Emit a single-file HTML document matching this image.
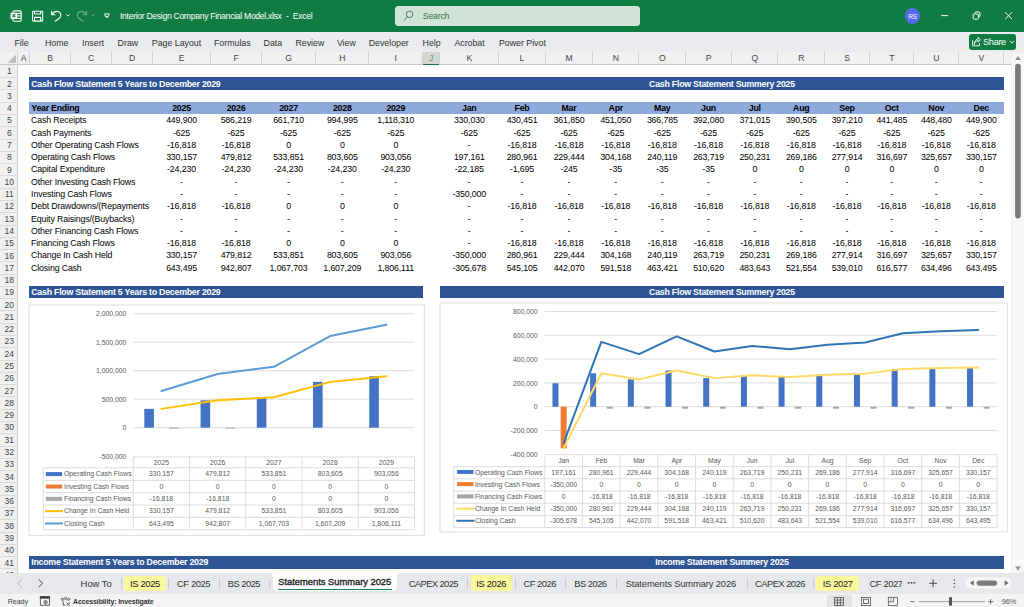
<!DOCTYPE html><html><head><meta charset="utf-8"><title>Interior Design Company Financial Model.xlsx - Excel</title>
<style>html,body{margin:0;padding:0;}body{width:1024px;height:607px;overflow:hidden;position:relative;background:#fff;font-family:"Liberation Sans",sans-serif;}div{box-sizing:border-box;}</style></head><body>
<div style="position:absolute;left:0px;top:0px;width:1024px;height:32px;background:#107C41;"></div>
<svg style="position:absolute;left:0;top:0" width="130" height="32" viewBox="0 0 130 32">
<g fill="none" stroke="#fff" stroke-width="1.1">
<rect x="12.9" y="10.9" width="8.3" height="10.4" rx="1.2"/>
<line x1="16.8" y1="13.4" x2="21" y2="13.4"/><line x1="16.8" y1="15.9" x2="21" y2="15.9"/><line x1="16.8" y1="18.4" x2="21" y2="18.4"/>
</g>
<rect x="10.6" y="12.7" width="6.6" height="6.2" rx="0.6" fill="#fff"/>
<path d="M12.4 14.2 L15.4 17.4 M15.4 14.2 L12.4 17.4" stroke="#107C41" stroke-width="1.15"/>
<g fill="none" stroke="#fff" stroke-width="1.1" stroke-linejoin="round">
<rect x="32.6" y="11.2" width="10" height="9.9" rx="0.8"/>
<path d="M34.6 11.2 V14 H40.6 V11.2"/>
<path d="M34.6 21.1 V17.4 H40.6 V21.1"/>
</g>
<g fill="none" stroke="#fff" stroke-width="1.1" stroke-linecap="round" stroke-linejoin="round">
<path d="M51.6 11.3 V14.7 H55"/>
<path d="M51.9 14.4 C53.2 12.4 55 11.4 57 11.4 C60.6 11.4 62.2 15.6 59.6 18 L55.2 21.2"/>
<path d="M66.6 14.8 L68 16.1 L69.4 14.8" stroke-width="0.9"/>
</g>
<g fill="none" stroke="#6FAF8A" stroke-width="1.1" stroke-linecap="round" stroke-linejoin="round">
<path d="M86.6 11.3 V14.7 H83.2"/>
<path d="M86.3 14.4 C85 12.4 83.2 11.4 81.2 11.4 C77.6 11.4 76 15.6 78.6 18 L83 21.2"/>
<path d="M91.6 14.8 L93 16.1 L94.4 14.8" stroke-width="0.9"/>
</g>
<g fill="none" stroke="#fff" stroke-width="1.1" stroke-linecap="round">
<line x1="104.4" y1="14" x2="109.4" y2="14"/>
<path d="M105 15.6 L106.9 17.4 L108.8 15.6"/>
</g>
</svg>
<div style="position:absolute;left:120px;top:9.9px;height:12px;line-height:12px;font-size:8.6px;color:#fff;font-weight:400;letter-spacing:-0.3px;white-space:nowrap;">Interior Design Company Financial Model.xlsx</div>
<div style="position:absolute;left:286px;top:9.9px;height:12px;line-height:12px;font-size:8.6px;color:#fff;font-weight:400;letter-spacing:0px;white-space:nowrap;">-</div>
<div style="position:absolute;left:292.8px;top:9.9px;height:12px;line-height:12px;font-size:8.6px;color:#fff;font-weight:400;letter-spacing:-0.3px;white-space:nowrap;">Excel</div>
<div style="position:absolute;left:395.1px;top:5.5px;width:244.7px;height:20.7px;background:#CFE3D6;border-radius:3px;border:1px solid #D3E6D9;"></div>
<svg style="position:absolute;left:400px;top:8px" width="16" height="16" viewBox="0 0 16 16"><g fill="none" stroke="#3F7D58" stroke-width="0.95"><circle cx="9.6" cy="6.4" r="3.3"/><line x1="7.3" y1="8.8" x2="4.2" y2="12.4" stroke-linecap="round"/></g></svg>
<div style="position:absolute;left:422.8px;top:10.2px;height:12px;line-height:12px;font-size:8.8px;color:#3A7752;font-weight:400;letter-spacing:-0.25px;white-space:nowrap;">Search</div>
<div style="position:absolute;left:904.7px;top:8px;width:15.8px;height:15.8px;border-radius:50%;background:#5468E6;"></div>
<div style="position:absolute;left:902.5px;top:11.2px;width:20px;text-align:center;height:12px;line-height:12px;font-size:6.6px;color:#fff;font-weight:400;letter-spacing:-0.35px;white-space:nowrap;">RS</div>
<svg style="position:absolute;left:930px;top:0" width="94" height="32" viewBox="930 0 94 32"><g fill="none" stroke="#fff" stroke-width="1">
<line x1="941.2" y1="15.6" x2="948" y2="15.6"/>
<rect x="973.2" y="14" width="5.2" height="5.2" rx="1"/>
<path d="M975 13.2 V12.9 A0.9 0.9 0 0 1 975.9 12 H979 A0.9 0.9 0 0 1 979.9 12.9 V16 A0.9 0.9 0 0 1 979 16.9 H978.6"/>
<path d="M1005.2 12.3 L1012 19.1 M1012 12.3 L1005.2 19.1"/>
</g></svg>
<div style="position:absolute;left:0px;top:32px;width:1024px;height:20px;background:#E9EBEE;"></div>
<div style="position:absolute;left:14.5px;top:36.6px;height:12px;line-height:12px;font-size:8.8px;color:#333;font-weight:400;letter-spacing:0px;white-space:nowrap;">File</div>
<div style="position:absolute;left:45px;top:36.6px;height:12px;line-height:12px;font-size:8.8px;color:#333;font-weight:400;letter-spacing:0px;white-space:nowrap;">Home</div>
<div style="position:absolute;left:82px;top:36.6px;height:12px;line-height:12px;font-size:8.8px;color:#333;font-weight:400;letter-spacing:0px;white-space:nowrap;">Insert</div>
<div style="position:absolute;left:117.6px;top:36.6px;height:12px;line-height:12px;font-size:8.8px;color:#333;font-weight:400;letter-spacing:0px;white-space:nowrap;">Draw</div>
<div style="position:absolute;left:151.8px;top:36.6px;height:12px;line-height:12px;font-size:8.8px;color:#333;font-weight:400;letter-spacing:0px;white-space:nowrap;">Page Layout</div>
<div style="position:absolute;left:214px;top:36.6px;height:12px;line-height:12px;font-size:8.8px;color:#333;font-weight:400;letter-spacing:0px;white-space:nowrap;">Formulas</div>
<div style="position:absolute;left:263.6px;top:36.6px;height:12px;line-height:12px;font-size:8.8px;color:#333;font-weight:400;letter-spacing:0px;white-space:nowrap;">Data</div>
<div style="position:absolute;left:295.4px;top:36.6px;height:12px;line-height:12px;font-size:8.8px;color:#333;font-weight:400;letter-spacing:0px;white-space:nowrap;">Review</div>
<div style="position:absolute;left:336.9px;top:36.6px;height:12px;line-height:12px;font-size:8.8px;color:#333;font-weight:400;letter-spacing:0px;white-space:nowrap;">View</div>
<div style="position:absolute;left:368.7px;top:36.6px;height:12px;line-height:12px;font-size:8.8px;color:#333;font-weight:400;letter-spacing:0px;white-space:nowrap;">Developer</div>
<div style="position:absolute;left:422.6px;top:36.6px;height:12px;line-height:12px;font-size:8.8px;color:#333;font-weight:400;letter-spacing:0px;white-space:nowrap;">Help</div>
<div style="position:absolute;left:454.4px;top:36.6px;height:12px;line-height:12px;font-size:8.8px;color:#333;font-weight:400;letter-spacing:0px;white-space:nowrap;">Acrobat</div>
<div style="position:absolute;left:498.9px;top:36.6px;height:12px;line-height:12px;font-size:8.8px;color:#333;font-weight:400;letter-spacing:0px;white-space:nowrap;">Power Pivot</div>
<div style="position:absolute;left:969.1px;top:34.2px;width:47.2px;height:15.8px;background:#107C41;border-radius:3px;"></div>
<svg style="position:absolute;left:969px;top:34px" width="48" height="16" viewBox="969 34 48 16"><g fill="none" stroke="#fff" stroke-width="0.9" stroke-linejoin="round" stroke-linecap="round">
<path d="M972.6 40.6 V45.8 H979.6 V43.6"/>
<path d="M974.4 44 C974.8 41.6 976.4 40.6 978.2 40.6 V42.2 L980.4 39.8 L978.2 37.4 V39 C975.8 39.2 974.6 41.2 974.4 44 Z"/>
<path d="M1010.4 41.4 L1012.1 43 L1013.8 41.4"/>
</g></svg>
<div style="position:absolute;left:983.1px;top:36.2px;height:12px;line-height:12px;font-size:9.2px;color:#fff;font-weight:400;letter-spacing:-0.35px;white-space:nowrap;">Share</div>
<div style="position:absolute;left:0px;top:52px;width:1011.3px;height:12.5px;background:#F0F0F0;border-bottom:1px solid #C6C6C6;"></div>
<svg style="position:absolute;left:0;top:52px" width="18" height="13" viewBox="0 52 18 13"><path d="M16 54.8 V62.8 H7.8 Z" fill="#BDBDBD"/></svg>
<div style="position:absolute;left:17.3px;top:52px;width:0.9px;height:12.5px;background:#D0D0D0;"></div>
<div style="position:absolute;left:28.65px;top:52px;width:0.9px;height:12.5px;background:#D0D0D0;"></div>
<div style="position:absolute;left:3.5px;top:52.4px;width:40px;text-align:center;height:12px;line-height:12px;font-size:8.6px;color:#444;font-weight:400;letter-spacing:0px;white-space:nowrap;">A</div>
<div style="position:absolute;left:69.9px;top:52px;width:0.9px;height:12.5px;background:#D0D0D0;"></div>
<div style="position:absolute;left:30.12px;top:52.4px;width:40px;text-align:center;height:12px;line-height:12px;font-size:8.6px;color:#444;font-weight:400;letter-spacing:0px;white-space:nowrap;">B</div>
<div style="position:absolute;left:110.65px;top:52px;width:0.9px;height:12.5px;background:#D0D0D0;"></div>
<div style="position:absolute;left:71.12px;top:52.4px;width:40px;text-align:center;height:12px;line-height:12px;font-size:8.6px;color:#444;font-weight:400;letter-spacing:0px;white-space:nowrap;">C</div>
<div style="position:absolute;left:151.65px;top:52px;width:0.9px;height:12.5px;background:#D0D0D0;"></div>
<div style="position:absolute;left:112px;top:52.4px;width:40px;text-align:center;height:12px;line-height:12px;font-size:8.6px;color:#444;font-weight:400;letter-spacing:0px;white-space:nowrap;">D</div>
<div style="position:absolute;left:209.65px;top:52px;width:0.9px;height:12.5px;background:#D0D0D0;"></div>
<div style="position:absolute;left:161.5px;top:52.4px;width:40px;text-align:center;height:12px;line-height:12px;font-size:8.6px;color:#444;font-weight:400;letter-spacing:0px;white-space:nowrap;">E</div>
<div style="position:absolute;left:260.65px;top:52px;width:0.9px;height:12.5px;background:#D0D0D0;"></div>
<div style="position:absolute;left:216px;top:52.4px;width:40px;text-align:center;height:12px;line-height:12px;font-size:8.6px;color:#444;font-weight:400;letter-spacing:0px;white-space:nowrap;">F</div>
<div style="position:absolute;left:314.65px;top:52px;width:0.9px;height:12.5px;background:#D0D0D0;"></div>
<div style="position:absolute;left:268.5px;top:52.4px;width:40px;text-align:center;height:12px;line-height:12px;font-size:8.6px;color:#444;font-weight:400;letter-spacing:0px;white-space:nowrap;">G</div>
<div style="position:absolute;left:368.15px;top:52px;width:0.9px;height:12.5px;background:#D0D0D0;"></div>
<div style="position:absolute;left:322.25px;top:52.4px;width:40px;text-align:center;height:12px;line-height:12px;font-size:8.6px;color:#444;font-weight:400;letter-spacing:0px;white-space:nowrap;">H</div>
<div style="position:absolute;left:421.65px;top:52px;width:0.9px;height:12.5px;background:#D0D0D0;"></div>
<div style="position:absolute;left:375.75px;top:52.4px;width:40px;text-align:center;height:12px;line-height:12px;font-size:8.6px;color:#444;font-weight:400;letter-spacing:0px;white-space:nowrap;">I</div>
<div style="position:absolute;left:422.5px;top:52px;width:17.5px;height:12.5px;background:#D6D6D6;"></div>
<div style="position:absolute;left:422.5px;top:63.6px;width:17.5px;height:1.3px;background:#107C41;"></div>
<div style="position:absolute;left:439.15px;top:52px;width:0.9px;height:12.5px;background:#D0D0D0;"></div>
<div style="position:absolute;left:411.25px;top:52.4px;width:40px;text-align:center;height:12px;line-height:12px;font-size:8.6px;color:#5E8E6E;font-weight:400;letter-spacing:0px;white-space:nowrap;">J</div>
<div style="position:absolute;left:497.65px;top:52px;width:0.9px;height:12.5px;background:#D0D0D0;"></div>
<div style="position:absolute;left:449.25px;top:52.4px;width:40px;text-align:center;height:12px;line-height:12px;font-size:8.6px;color:#444;font-weight:400;letter-spacing:0px;white-space:nowrap;">K</div>
<div style="position:absolute;left:544.65px;top:52px;width:0.9px;height:12.5px;background:#D0D0D0;"></div>
<div style="position:absolute;left:502px;top:52.4px;width:40px;text-align:center;height:12px;line-height:12px;font-size:8.6px;color:#444;font-weight:400;letter-spacing:0px;white-space:nowrap;">L</div>
<div style="position:absolute;left:591.65px;top:52px;width:0.9px;height:12.5px;background:#D0D0D0;"></div>
<div style="position:absolute;left:549px;top:52.4px;width:40px;text-align:center;height:12px;line-height:12px;font-size:8.6px;color:#444;font-weight:400;letter-spacing:0px;white-space:nowrap;">M</div>
<div style="position:absolute;left:638.15px;top:52px;width:0.9px;height:12.5px;background:#D0D0D0;"></div>
<div style="position:absolute;left:595.75px;top:52.4px;width:40px;text-align:center;height:12px;line-height:12px;font-size:8.6px;color:#444;font-weight:400;letter-spacing:0px;white-space:nowrap;">N</div>
<div style="position:absolute;left:684.65px;top:52px;width:0.9px;height:12.5px;background:#D0D0D0;"></div>
<div style="position:absolute;left:642.25px;top:52.4px;width:40px;text-align:center;height:12px;line-height:12px;font-size:8.6px;color:#444;font-weight:400;letter-spacing:0px;white-space:nowrap;">O</div>
<div style="position:absolute;left:730.65px;top:52px;width:0.9px;height:12.5px;background:#D0D0D0;"></div>
<div style="position:absolute;left:688.5px;top:52.4px;width:40px;text-align:center;height:12px;line-height:12px;font-size:8.6px;color:#444;font-weight:400;letter-spacing:0px;white-space:nowrap;">P</div>
<div style="position:absolute;left:777.15px;top:52px;width:0.9px;height:12.5px;background:#D0D0D0;"></div>
<div style="position:absolute;left:734.75px;top:52.4px;width:40px;text-align:center;height:12px;line-height:12px;font-size:8.6px;color:#444;font-weight:400;letter-spacing:0px;white-space:nowrap;">Q</div>
<div style="position:absolute;left:823.65px;top:52px;width:0.9px;height:12.5px;background:#D0D0D0;"></div>
<div style="position:absolute;left:781.25px;top:52.4px;width:40px;text-align:center;height:12px;line-height:12px;font-size:8.6px;color:#444;font-weight:400;letter-spacing:0px;white-space:nowrap;">R</div>
<div style="position:absolute;left:868.65px;top:52px;width:0.9px;height:12.5px;background:#D0D0D0;"></div>
<div style="position:absolute;left:827px;top:52.4px;width:40px;text-align:center;height:12px;line-height:12px;font-size:8.6px;color:#444;font-weight:400;letter-spacing:0px;white-space:nowrap;">S</div>
<div style="position:absolute;left:913.15px;top:52px;width:0.9px;height:12.5px;background:#D0D0D0;"></div>
<div style="position:absolute;left:871.75px;top:52.4px;width:40px;text-align:center;height:12px;line-height:12px;font-size:8.6px;color:#444;font-weight:400;letter-spacing:0px;white-space:nowrap;">T</div>
<div style="position:absolute;left:957.65px;top:52px;width:0.9px;height:12.5px;background:#D0D0D0;"></div>
<div style="position:absolute;left:916.25px;top:52.4px;width:40px;text-align:center;height:12px;line-height:12px;font-size:8.6px;color:#444;font-weight:400;letter-spacing:0px;white-space:nowrap;">U</div>
<div style="position:absolute;left:1003.15px;top:52px;width:0.9px;height:12.5px;background:#D0D0D0;"></div>
<div style="position:absolute;left:961.25px;top:52.4px;width:40px;text-align:center;height:12px;line-height:12px;font-size:8.6px;color:#444;font-weight:400;letter-spacing:0px;white-space:nowrap;">V</div>
<div style="position:absolute;left:1011.3px;top:52px;width:12.7px;height:521px;background:#F0F0F0;"></div>
<div style="position:absolute;left:1011.8px;top:53px;width:12.2px;height:519.5px;background:#F7F7F7;border-radius:5px;"></div>
<svg style="position:absolute;left:1011px;top:52px" width="13" height="521" viewBox="1011 52 13 521"><path d="M1015.2 60 L1018 56 L1020.8 60 Z" fill="#8A8A8A"/><path d="M1015.2 566.6 L1018 570.8 L1020.8 566.6 Z" fill="#8A8A8A"/><rect x="1015.1" y="63.8" width="5.7" height="154.6" rx="2.85" fill="#7B7B7B"/></svg>
<div style="position:absolute;left:0px;top:64.5px;width:17.5px;height:508.5px;background:#F0F0F0;"></div>
<div style="position:absolute;left:17.3px;top:64.5px;width:0.9px;height:508.5px;background:#CFCFCF;"></div>
<div style="position:absolute;left:0px;top:77.15px;width:17.5px;height:0.9px;background:#DADADA;"></div>
<div style="position:absolute;left:0.55px;top:65.32px;width:17.5px;text-align:center;height:12.3px;line-height:12.3px;font-size:8.5px;color:#444;font-weight:400;letter-spacing:0px;white-space:nowrap;">1</div>
<div style="position:absolute;left:0px;top:89.43px;width:17.5px;height:0.9px;background:#DADADA;"></div>
<div style="position:absolute;left:0.55px;top:77.6px;width:17.5px;text-align:center;height:12.3px;line-height:12.3px;font-size:8.5px;color:#444;font-weight:400;letter-spacing:0px;white-space:nowrap;">2</div>
<div style="position:absolute;left:0px;top:101.71px;width:17.5px;height:0.9px;background:#DADADA;"></div>
<div style="position:absolute;left:0.55px;top:89.88px;width:17.5px;text-align:center;height:12.3px;line-height:12.3px;font-size:8.5px;color:#444;font-weight:400;letter-spacing:0px;white-space:nowrap;">3</div>
<div style="position:absolute;left:0px;top:113.99px;width:17.5px;height:0.9px;background:#DADADA;"></div>
<div style="position:absolute;left:0.55px;top:102.16px;width:17.5px;text-align:center;height:12.3px;line-height:12.3px;font-size:8.5px;color:#444;font-weight:400;letter-spacing:0px;white-space:nowrap;">4</div>
<div style="position:absolute;left:0px;top:126.27px;width:17.5px;height:0.9px;background:#DADADA;"></div>
<div style="position:absolute;left:0.55px;top:114.44px;width:17.5px;text-align:center;height:12.3px;line-height:12.3px;font-size:8.5px;color:#444;font-weight:400;letter-spacing:0px;white-space:nowrap;">5</div>
<div style="position:absolute;left:0px;top:138.55px;width:17.5px;height:0.9px;background:#DADADA;"></div>
<div style="position:absolute;left:0.55px;top:126.72px;width:17.5px;text-align:center;height:12.3px;line-height:12.3px;font-size:8.5px;color:#444;font-weight:400;letter-spacing:0px;white-space:nowrap;">6</div>
<div style="position:absolute;left:0px;top:150.83px;width:17.5px;height:0.9px;background:#DADADA;"></div>
<div style="position:absolute;left:0.55px;top:139px;width:17.5px;text-align:center;height:12.3px;line-height:12.3px;font-size:8.5px;color:#444;font-weight:400;letter-spacing:0px;white-space:nowrap;">7</div>
<div style="position:absolute;left:0px;top:163.11px;width:17.5px;height:0.9px;background:#DADADA;"></div>
<div style="position:absolute;left:0.55px;top:151.28px;width:17.5px;text-align:center;height:12.3px;line-height:12.3px;font-size:8.5px;color:#444;font-weight:400;letter-spacing:0px;white-space:nowrap;">8</div>
<div style="position:absolute;left:0px;top:175.39px;width:17.5px;height:0.9px;background:#DADADA;"></div>
<div style="position:absolute;left:0.55px;top:163.56px;width:17.5px;text-align:center;height:12.3px;line-height:12.3px;font-size:8.5px;color:#444;font-weight:400;letter-spacing:0px;white-space:nowrap;">9</div>
<div style="position:absolute;left:0px;top:187.67px;width:17.5px;height:0.9px;background:#DADADA;"></div>
<div style="position:absolute;left:0.55px;top:175.84px;width:17.5px;text-align:center;height:12.3px;line-height:12.3px;font-size:8.5px;color:#444;font-weight:400;letter-spacing:0px;white-space:nowrap;">10</div>
<div style="position:absolute;left:0px;top:199.95px;width:17.5px;height:0.9px;background:#DADADA;"></div>
<div style="position:absolute;left:0.55px;top:188.12px;width:17.5px;text-align:center;height:12.3px;line-height:12.3px;font-size:8.5px;color:#444;font-weight:400;letter-spacing:0px;white-space:nowrap;">11</div>
<div style="position:absolute;left:0px;top:212.23px;width:17.5px;height:0.9px;background:#DADADA;"></div>
<div style="position:absolute;left:0.55px;top:200.4px;width:17.5px;text-align:center;height:12.3px;line-height:12.3px;font-size:8.5px;color:#444;font-weight:400;letter-spacing:0px;white-space:nowrap;">12</div>
<div style="position:absolute;left:0px;top:224.51px;width:17.5px;height:0.9px;background:#DADADA;"></div>
<div style="position:absolute;left:0.55px;top:212.68px;width:17.5px;text-align:center;height:12.3px;line-height:12.3px;font-size:8.5px;color:#444;font-weight:400;letter-spacing:0px;white-space:nowrap;">13</div>
<div style="position:absolute;left:0px;top:236.79px;width:17.5px;height:0.9px;background:#DADADA;"></div>
<div style="position:absolute;left:0.55px;top:224.96px;width:17.5px;text-align:center;height:12.3px;line-height:12.3px;font-size:8.5px;color:#444;font-weight:400;letter-spacing:0px;white-space:nowrap;">14</div>
<div style="position:absolute;left:0px;top:249.07px;width:17.5px;height:0.9px;background:#DADADA;"></div>
<div style="position:absolute;left:0.55px;top:237.24px;width:17.5px;text-align:center;height:12.3px;line-height:12.3px;font-size:8.5px;color:#444;font-weight:400;letter-spacing:0px;white-space:nowrap;">15</div>
<div style="position:absolute;left:0px;top:261.35px;width:17.5px;height:0.9px;background:#DADADA;"></div>
<div style="position:absolute;left:0.55px;top:249.52px;width:17.5px;text-align:center;height:12.3px;line-height:12.3px;font-size:8.5px;color:#444;font-weight:400;letter-spacing:0px;white-space:nowrap;">16</div>
<div style="position:absolute;left:0px;top:273.63px;width:17.5px;height:0.9px;background:#DADADA;"></div>
<div style="position:absolute;left:0.55px;top:261.8px;width:17.5px;text-align:center;height:12.3px;line-height:12.3px;font-size:8.5px;color:#444;font-weight:400;letter-spacing:0px;white-space:nowrap;">17</div>
<div style="position:absolute;left:0px;top:285.91px;width:17.5px;height:0.9px;background:#DADADA;"></div>
<div style="position:absolute;left:0.55px;top:274.08px;width:17.5px;text-align:center;height:12.3px;line-height:12.3px;font-size:8.5px;color:#444;font-weight:400;letter-spacing:0px;white-space:nowrap;">18</div>
<div style="position:absolute;left:0px;top:298.19px;width:17.5px;height:0.9px;background:#DADADA;"></div>
<div style="position:absolute;left:0.55px;top:286.36px;width:17.5px;text-align:center;height:12.3px;line-height:12.3px;font-size:8.5px;color:#444;font-weight:400;letter-spacing:0px;white-space:nowrap;">19</div>
<div style="position:absolute;left:0px;top:310.47px;width:17.5px;height:0.9px;background:#DADADA;"></div>
<div style="position:absolute;left:0.55px;top:298.64px;width:17.5px;text-align:center;height:12.3px;line-height:12.3px;font-size:8.5px;color:#444;font-weight:400;letter-spacing:0px;white-space:nowrap;">20</div>
<div style="position:absolute;left:0px;top:322.75px;width:17.5px;height:0.9px;background:#DADADA;"></div>
<div style="position:absolute;left:0.55px;top:310.92px;width:17.5px;text-align:center;height:12.3px;line-height:12.3px;font-size:8.5px;color:#444;font-weight:400;letter-spacing:0px;white-space:nowrap;">21</div>
<div style="position:absolute;left:0px;top:335.03px;width:17.5px;height:0.9px;background:#DADADA;"></div>
<div style="position:absolute;left:0.55px;top:323.2px;width:17.5px;text-align:center;height:12.3px;line-height:12.3px;font-size:8.5px;color:#444;font-weight:400;letter-spacing:0px;white-space:nowrap;">22</div>
<div style="position:absolute;left:0px;top:347.31px;width:17.5px;height:0.9px;background:#DADADA;"></div>
<div style="position:absolute;left:0.55px;top:335.48px;width:17.5px;text-align:center;height:12.3px;line-height:12.3px;font-size:8.5px;color:#444;font-weight:400;letter-spacing:0px;white-space:nowrap;">23</div>
<div style="position:absolute;left:0px;top:359.59px;width:17.5px;height:0.9px;background:#DADADA;"></div>
<div style="position:absolute;left:0.55px;top:347.76px;width:17.5px;text-align:center;height:12.3px;line-height:12.3px;font-size:8.5px;color:#444;font-weight:400;letter-spacing:0px;white-space:nowrap;">24</div>
<div style="position:absolute;left:0px;top:371.87px;width:17.5px;height:0.9px;background:#DADADA;"></div>
<div style="position:absolute;left:0.55px;top:360.04px;width:17.5px;text-align:center;height:12.3px;line-height:12.3px;font-size:8.5px;color:#444;font-weight:400;letter-spacing:0px;white-space:nowrap;">25</div>
<div style="position:absolute;left:0px;top:384.15px;width:17.5px;height:0.9px;background:#DADADA;"></div>
<div style="position:absolute;left:0.55px;top:372.32px;width:17.5px;text-align:center;height:12.3px;line-height:12.3px;font-size:8.5px;color:#444;font-weight:400;letter-spacing:0px;white-space:nowrap;">26</div>
<div style="position:absolute;left:0px;top:396.43px;width:17.5px;height:0.9px;background:#DADADA;"></div>
<div style="position:absolute;left:0.55px;top:384.6px;width:17.5px;text-align:center;height:12.3px;line-height:12.3px;font-size:8.5px;color:#444;font-weight:400;letter-spacing:0px;white-space:nowrap;">27</div>
<div style="position:absolute;left:0px;top:408.71px;width:17.5px;height:0.9px;background:#DADADA;"></div>
<div style="position:absolute;left:0.55px;top:396.88px;width:17.5px;text-align:center;height:12.3px;line-height:12.3px;font-size:8.5px;color:#444;font-weight:400;letter-spacing:0px;white-space:nowrap;">28</div>
<div style="position:absolute;left:0px;top:420.99px;width:17.5px;height:0.9px;background:#DADADA;"></div>
<div style="position:absolute;left:0.55px;top:409.16px;width:17.5px;text-align:center;height:12.3px;line-height:12.3px;font-size:8.5px;color:#444;font-weight:400;letter-spacing:0px;white-space:nowrap;">29</div>
<div style="position:absolute;left:0px;top:433.27px;width:17.5px;height:0.9px;background:#DADADA;"></div>
<div style="position:absolute;left:0.55px;top:421.44px;width:17.5px;text-align:center;height:12.3px;line-height:12.3px;font-size:8.5px;color:#444;font-weight:400;letter-spacing:0px;white-space:nowrap;">30</div>
<div style="position:absolute;left:0px;top:445.55px;width:17.5px;height:0.9px;background:#DADADA;"></div>
<div style="position:absolute;left:0.55px;top:433.72px;width:17.5px;text-align:center;height:12.3px;line-height:12.3px;font-size:8.5px;color:#444;font-weight:400;letter-spacing:0px;white-space:nowrap;">31</div>
<div style="position:absolute;left:0px;top:457.83px;width:17.5px;height:0.9px;background:#DADADA;"></div>
<div style="position:absolute;left:0.55px;top:446px;width:17.5px;text-align:center;height:12.3px;line-height:12.3px;font-size:8.5px;color:#444;font-weight:400;letter-spacing:0px;white-space:nowrap;">32</div>
<div style="position:absolute;left:0px;top:470.11px;width:17.5px;height:0.9px;background:#DADADA;"></div>
<div style="position:absolute;left:0.55px;top:458.28px;width:17.5px;text-align:center;height:12.3px;line-height:12.3px;font-size:8.5px;color:#444;font-weight:400;letter-spacing:0px;white-space:nowrap;">33</div>
<div style="position:absolute;left:0px;top:482.39px;width:17.5px;height:0.9px;background:#DADADA;"></div>
<div style="position:absolute;left:0.55px;top:470.56px;width:17.5px;text-align:center;height:12.3px;line-height:12.3px;font-size:8.5px;color:#444;font-weight:400;letter-spacing:0px;white-space:nowrap;">34</div>
<div style="position:absolute;left:0px;top:494.67px;width:17.5px;height:0.9px;background:#DADADA;"></div>
<div style="position:absolute;left:0.55px;top:482.84px;width:17.5px;text-align:center;height:12.3px;line-height:12.3px;font-size:8.5px;color:#444;font-weight:400;letter-spacing:0px;white-space:nowrap;">35</div>
<div style="position:absolute;left:0px;top:506.95px;width:17.5px;height:0.9px;background:#DADADA;"></div>
<div style="position:absolute;left:0.55px;top:495.12px;width:17.5px;text-align:center;height:12.3px;line-height:12.3px;font-size:8.5px;color:#444;font-weight:400;letter-spacing:0px;white-space:nowrap;">36</div>
<div style="position:absolute;left:0px;top:519.23px;width:17.5px;height:0.9px;background:#DADADA;"></div>
<div style="position:absolute;left:0.55px;top:507.4px;width:17.5px;text-align:center;height:12.3px;line-height:12.3px;font-size:8.5px;color:#444;font-weight:400;letter-spacing:0px;white-space:nowrap;">37</div>
<div style="position:absolute;left:0px;top:531.51px;width:17.5px;height:0.9px;background:#DADADA;"></div>
<div style="position:absolute;left:0.55px;top:519.68px;width:17.5px;text-align:center;height:12.3px;line-height:12.3px;font-size:8.5px;color:#444;font-weight:400;letter-spacing:0px;white-space:nowrap;">38</div>
<div style="position:absolute;left:0px;top:543.79px;width:17.5px;height:0.9px;background:#DADADA;"></div>
<div style="position:absolute;left:0.55px;top:531.96px;width:17.5px;text-align:center;height:12.3px;line-height:12.3px;font-size:8.5px;color:#444;font-weight:400;letter-spacing:0px;white-space:nowrap;">39</div>
<div style="position:absolute;left:0px;top:556.07px;width:17.5px;height:0.9px;background:#DADADA;"></div>
<div style="position:absolute;left:0.55px;top:544.24px;width:17.5px;text-align:center;height:12.3px;line-height:12.3px;font-size:8.5px;color:#444;font-weight:400;letter-spacing:0px;white-space:nowrap;">40</div>
<div style="position:absolute;left:0px;top:568.35px;width:17.5px;height:0.9px;background:#DADADA;"></div>
<div style="position:absolute;left:0.55px;top:556.52px;width:17.5px;text-align:center;height:12.3px;line-height:12.3px;font-size:8.5px;color:#444;font-weight:400;letter-spacing:0px;white-space:nowrap;">41</div>
<div style="position:absolute;left:0px;top:580.63px;width:17.5px;height:0.9px;background:#DADADA;"></div>
<div style="position:absolute;left:0.55px;top:568.8px;width:17.5px;text-align:center;height:12.3px;line-height:12.3px;font-size:8.5px;color:#444;font-weight:400;letter-spacing:0px;white-space:nowrap;">42</div>
<div style="position:absolute;left:18px;top:64.5px;width:993.3px;height:508.5px;background:#fff;"></div>
<div style="position:absolute;left:28.9px;top:77px;width:975.1px;height:12.5px;background:#2F5597;"></div>
<div style="position:absolute;left:31.25px;top:77.5px;height:12.3px;line-height:12.3px;font-size:8.8px;color:#fff;font-weight:700;letter-spacing:-0.24px;white-space:nowrap;">Cash Flow Statement 5 Years to December 2029</div>
<div style="position:absolute;left:572px;top:77.5px;width:300px;text-align:center;height:12.3px;line-height:12.3px;font-size:8.8px;color:#fff;font-weight:700;letter-spacing:-0.24px;white-space:nowrap;">Cash Flow Statement Summery 2025</div>
<div style="position:absolute;left:28.9px;top:101.56px;width:975.1px;height:12.5px;background:#8EA9DB;"></div>
<div style="position:absolute;left:31.25px;top:102.06px;height:12.3px;line-height:12.3px;font-size:8.8px;color:#000;font-weight:700;letter-spacing:-0.24px;white-space:nowrap;">Year Ending</div>
<div style="position:absolute;left:151.5px;top:102.06px;width:60px;text-align:center;height:12.3px;line-height:12.3px;font-size:8.8px;color:#000;font-weight:700;letter-spacing:-0.24px;white-space:nowrap;">2025</div>
<div style="position:absolute;left:206px;top:102.06px;width:60px;text-align:center;height:12.3px;line-height:12.3px;font-size:8.8px;color:#000;font-weight:700;letter-spacing:-0.24px;white-space:nowrap;">2026</div>
<div style="position:absolute;left:258.5px;top:102.06px;width:60px;text-align:center;height:12.3px;line-height:12.3px;font-size:8.8px;color:#000;font-weight:700;letter-spacing:-0.24px;white-space:nowrap;">2027</div>
<div style="position:absolute;left:312.25px;top:102.06px;width:60px;text-align:center;height:12.3px;line-height:12.3px;font-size:8.8px;color:#000;font-weight:700;letter-spacing:-0.24px;white-space:nowrap;">2028</div>
<div style="position:absolute;left:365.75px;top:102.06px;width:60px;text-align:center;height:12.3px;line-height:12.3px;font-size:8.8px;color:#000;font-weight:700;letter-spacing:-0.24px;white-space:nowrap;">2029</div>
<div style="position:absolute;left:439.25px;top:102.06px;width:60px;text-align:center;height:12.3px;line-height:12.3px;font-size:8.8px;color:#000;font-weight:700;letter-spacing:-0.24px;white-space:nowrap;">Jan</div>
<div style="position:absolute;left:492px;top:102.06px;width:60px;text-align:center;height:12.3px;line-height:12.3px;font-size:8.8px;color:#000;font-weight:700;letter-spacing:-0.24px;white-space:nowrap;">Feb</div>
<div style="position:absolute;left:539px;top:102.06px;width:60px;text-align:center;height:12.3px;line-height:12.3px;font-size:8.8px;color:#000;font-weight:700;letter-spacing:-0.24px;white-space:nowrap;">Mar</div>
<div style="position:absolute;left:585.75px;top:102.06px;width:60px;text-align:center;height:12.3px;line-height:12.3px;font-size:8.8px;color:#000;font-weight:700;letter-spacing:-0.24px;white-space:nowrap;">Apr</div>
<div style="position:absolute;left:632.25px;top:102.06px;width:60px;text-align:center;height:12.3px;line-height:12.3px;font-size:8.8px;color:#000;font-weight:700;letter-spacing:-0.24px;white-space:nowrap;">May</div>
<div style="position:absolute;left:678.5px;top:102.06px;width:60px;text-align:center;height:12.3px;line-height:12.3px;font-size:8.8px;color:#000;font-weight:700;letter-spacing:-0.24px;white-space:nowrap;">Jun</div>
<div style="position:absolute;left:724.75px;top:102.06px;width:60px;text-align:center;height:12.3px;line-height:12.3px;font-size:8.8px;color:#000;font-weight:700;letter-spacing:-0.24px;white-space:nowrap;">Jul</div>
<div style="position:absolute;left:771.25px;top:102.06px;width:60px;text-align:center;height:12.3px;line-height:12.3px;font-size:8.8px;color:#000;font-weight:700;letter-spacing:-0.24px;white-space:nowrap;">Aug</div>
<div style="position:absolute;left:817px;top:102.06px;width:60px;text-align:center;height:12.3px;line-height:12.3px;font-size:8.8px;color:#000;font-weight:700;letter-spacing:-0.24px;white-space:nowrap;">Sep</div>
<div style="position:absolute;left:861.75px;top:102.06px;width:60px;text-align:center;height:12.3px;line-height:12.3px;font-size:8.8px;color:#000;font-weight:700;letter-spacing:-0.24px;white-space:nowrap;">Oct</div>
<div style="position:absolute;left:906.25px;top:102.06px;width:60px;text-align:center;height:12.3px;line-height:12.3px;font-size:8.8px;color:#000;font-weight:700;letter-spacing:-0.24px;white-space:nowrap;">Nov</div>
<div style="position:absolute;left:951.25px;top:102.06px;width:60px;text-align:center;height:12.3px;line-height:12.3px;font-size:8.8px;color:#000;font-weight:700;letter-spacing:-0.24px;white-space:nowrap;">Dec</div>
<div style="position:absolute;left:31.1px;top:114.34px;height:12.3px;line-height:12.3px;font-size:8.8px;color:#000;font-weight:400;letter-spacing:-0.15px;white-space:nowrap;overflow:hidden;width:180px;">Cash Receipts</div>
<div style="position:absolute;left:151.5px;top:114.34px;width:60px;text-align:center;height:12.3px;line-height:12.3px;font-size:8.8px;color:#000;font-weight:400;letter-spacing:-0.15px;white-space:nowrap;">449,900</div>
<div style="position:absolute;left:206px;top:114.34px;width:60px;text-align:center;height:12.3px;line-height:12.3px;font-size:8.8px;color:#000;font-weight:400;letter-spacing:-0.15px;white-space:nowrap;">586,219</div>
<div style="position:absolute;left:258.5px;top:114.34px;width:60px;text-align:center;height:12.3px;line-height:12.3px;font-size:8.8px;color:#000;font-weight:400;letter-spacing:-0.15px;white-space:nowrap;">661,710</div>
<div style="position:absolute;left:312.25px;top:114.34px;width:60px;text-align:center;height:12.3px;line-height:12.3px;font-size:8.8px;color:#000;font-weight:400;letter-spacing:-0.15px;white-space:nowrap;">994,995</div>
<div style="position:absolute;left:365.75px;top:114.34px;width:60px;text-align:center;height:12.3px;line-height:12.3px;font-size:8.8px;color:#000;font-weight:400;letter-spacing:-0.15px;white-space:nowrap;">1,118,310</div>
<div style="position:absolute;left:439.25px;top:114.34px;width:60px;text-align:center;height:12.3px;line-height:12.3px;font-size:8.8px;color:#000;font-weight:400;letter-spacing:-0.15px;white-space:nowrap;">330,030</div>
<div style="position:absolute;left:492px;top:114.34px;width:60px;text-align:center;height:12.3px;line-height:12.3px;font-size:8.8px;color:#000;font-weight:400;letter-spacing:-0.15px;white-space:nowrap;">430,451</div>
<div style="position:absolute;left:539px;top:114.34px;width:60px;text-align:center;height:12.3px;line-height:12.3px;font-size:8.8px;color:#000;font-weight:400;letter-spacing:-0.15px;white-space:nowrap;">361,850</div>
<div style="position:absolute;left:585.75px;top:114.34px;width:60px;text-align:center;height:12.3px;line-height:12.3px;font-size:8.8px;color:#000;font-weight:400;letter-spacing:-0.15px;white-space:nowrap;">451,050</div>
<div style="position:absolute;left:632.25px;top:114.34px;width:60px;text-align:center;height:12.3px;line-height:12.3px;font-size:8.8px;color:#000;font-weight:400;letter-spacing:-0.15px;white-space:nowrap;">366,785</div>
<div style="position:absolute;left:678.5px;top:114.34px;width:60px;text-align:center;height:12.3px;line-height:12.3px;font-size:8.8px;color:#000;font-weight:400;letter-spacing:-0.15px;white-space:nowrap;">392,080</div>
<div style="position:absolute;left:724.75px;top:114.34px;width:60px;text-align:center;height:12.3px;line-height:12.3px;font-size:8.8px;color:#000;font-weight:400;letter-spacing:-0.15px;white-space:nowrap;">371,015</div>
<div style="position:absolute;left:771.25px;top:114.34px;width:60px;text-align:center;height:12.3px;line-height:12.3px;font-size:8.8px;color:#000;font-weight:400;letter-spacing:-0.15px;white-space:nowrap;">390,505</div>
<div style="position:absolute;left:817px;top:114.34px;width:60px;text-align:center;height:12.3px;line-height:12.3px;font-size:8.8px;color:#000;font-weight:400;letter-spacing:-0.15px;white-space:nowrap;">397,210</div>
<div style="position:absolute;left:861.75px;top:114.34px;width:60px;text-align:center;height:12.3px;line-height:12.3px;font-size:8.8px;color:#000;font-weight:400;letter-spacing:-0.15px;white-space:nowrap;">441,485</div>
<div style="position:absolute;left:906.25px;top:114.34px;width:60px;text-align:center;height:12.3px;line-height:12.3px;font-size:8.8px;color:#000;font-weight:400;letter-spacing:-0.15px;white-space:nowrap;">448,480</div>
<div style="position:absolute;left:951.25px;top:114.34px;width:60px;text-align:center;height:12.3px;line-height:12.3px;font-size:8.8px;color:#000;font-weight:400;letter-spacing:-0.15px;white-space:nowrap;">449,900</div>
<div style="position:absolute;left:31.1px;top:126.62px;height:12.3px;line-height:12.3px;font-size:8.8px;color:#000;font-weight:400;letter-spacing:-0.15px;white-space:nowrap;overflow:hidden;width:180px;">Cash Payments</div>
<div style="position:absolute;left:151.5px;top:126.62px;width:60px;text-align:center;height:12.3px;line-height:12.3px;font-size:8.8px;color:#000;font-weight:400;letter-spacing:-0.15px;white-space:nowrap;">-625</div>
<div style="position:absolute;left:206px;top:126.62px;width:60px;text-align:center;height:12.3px;line-height:12.3px;font-size:8.8px;color:#000;font-weight:400;letter-spacing:-0.15px;white-space:nowrap;">-625</div>
<div style="position:absolute;left:258.5px;top:126.62px;width:60px;text-align:center;height:12.3px;line-height:12.3px;font-size:8.8px;color:#000;font-weight:400;letter-spacing:-0.15px;white-space:nowrap;">-625</div>
<div style="position:absolute;left:312.25px;top:126.62px;width:60px;text-align:center;height:12.3px;line-height:12.3px;font-size:8.8px;color:#000;font-weight:400;letter-spacing:-0.15px;white-space:nowrap;">-625</div>
<div style="position:absolute;left:365.75px;top:126.62px;width:60px;text-align:center;height:12.3px;line-height:12.3px;font-size:8.8px;color:#000;font-weight:400;letter-spacing:-0.15px;white-space:nowrap;">-625</div>
<div style="position:absolute;left:439.25px;top:126.62px;width:60px;text-align:center;height:12.3px;line-height:12.3px;font-size:8.8px;color:#000;font-weight:400;letter-spacing:-0.15px;white-space:nowrap;">-625</div>
<div style="position:absolute;left:492px;top:126.62px;width:60px;text-align:center;height:12.3px;line-height:12.3px;font-size:8.8px;color:#000;font-weight:400;letter-spacing:-0.15px;white-space:nowrap;">-625</div>
<div style="position:absolute;left:539px;top:126.62px;width:60px;text-align:center;height:12.3px;line-height:12.3px;font-size:8.8px;color:#000;font-weight:400;letter-spacing:-0.15px;white-space:nowrap;">-625</div>
<div style="position:absolute;left:585.75px;top:126.62px;width:60px;text-align:center;height:12.3px;line-height:12.3px;font-size:8.8px;color:#000;font-weight:400;letter-spacing:-0.15px;white-space:nowrap;">-625</div>
<div style="position:absolute;left:632.25px;top:126.62px;width:60px;text-align:center;height:12.3px;line-height:12.3px;font-size:8.8px;color:#000;font-weight:400;letter-spacing:-0.15px;white-space:nowrap;">-625</div>
<div style="position:absolute;left:678.5px;top:126.62px;width:60px;text-align:center;height:12.3px;line-height:12.3px;font-size:8.8px;color:#000;font-weight:400;letter-spacing:-0.15px;white-space:nowrap;">-625</div>
<div style="position:absolute;left:724.75px;top:126.62px;width:60px;text-align:center;height:12.3px;line-height:12.3px;font-size:8.8px;color:#000;font-weight:400;letter-spacing:-0.15px;white-space:nowrap;">-625</div>
<div style="position:absolute;left:771.25px;top:126.62px;width:60px;text-align:center;height:12.3px;line-height:12.3px;font-size:8.8px;color:#000;font-weight:400;letter-spacing:-0.15px;white-space:nowrap;">-625</div>
<div style="position:absolute;left:817px;top:126.62px;width:60px;text-align:center;height:12.3px;line-height:12.3px;font-size:8.8px;color:#000;font-weight:400;letter-spacing:-0.15px;white-space:nowrap;">-625</div>
<div style="position:absolute;left:861.75px;top:126.62px;width:60px;text-align:center;height:12.3px;line-height:12.3px;font-size:8.8px;color:#000;font-weight:400;letter-spacing:-0.15px;white-space:nowrap;">-625</div>
<div style="position:absolute;left:906.25px;top:126.62px;width:60px;text-align:center;height:12.3px;line-height:12.3px;font-size:8.8px;color:#000;font-weight:400;letter-spacing:-0.15px;white-space:nowrap;">-625</div>
<div style="position:absolute;left:951.25px;top:126.62px;width:60px;text-align:center;height:12.3px;line-height:12.3px;font-size:8.8px;color:#000;font-weight:400;letter-spacing:-0.15px;white-space:nowrap;">-625</div>
<div style="position:absolute;left:31.1px;top:138.9px;height:12.3px;line-height:12.3px;font-size:8.8px;color:#000;font-weight:400;letter-spacing:-0.15px;white-space:nowrap;overflow:hidden;width:180px;">Other Operating Cash Flows</div>
<div style="position:absolute;left:151.5px;top:138.9px;width:60px;text-align:center;height:12.3px;line-height:12.3px;font-size:8.8px;color:#000;font-weight:400;letter-spacing:-0.15px;white-space:nowrap;">-16,818</div>
<div style="position:absolute;left:206px;top:138.9px;width:60px;text-align:center;height:12.3px;line-height:12.3px;font-size:8.8px;color:#000;font-weight:400;letter-spacing:-0.15px;white-space:nowrap;">-16,818</div>
<div style="position:absolute;left:258.5px;top:138.9px;width:60px;text-align:center;height:12.3px;line-height:12.3px;font-size:8.8px;color:#000;font-weight:400;letter-spacing:-0.15px;white-space:nowrap;">0</div>
<div style="position:absolute;left:312.25px;top:138.9px;width:60px;text-align:center;height:12.3px;line-height:12.3px;font-size:8.8px;color:#000;font-weight:400;letter-spacing:-0.15px;white-space:nowrap;">0</div>
<div style="position:absolute;left:365.75px;top:138.9px;width:60px;text-align:center;height:12.3px;line-height:12.3px;font-size:8.8px;color:#000;font-weight:400;letter-spacing:-0.15px;white-space:nowrap;">0</div>
<div style="position:absolute;left:439.25px;top:138.9px;width:60px;text-align:center;height:12.3px;line-height:12.3px;font-size:8.8px;color:#000;font-weight:400;letter-spacing:-0.15px;white-space:nowrap;">-</div>
<div style="position:absolute;left:492px;top:138.9px;width:60px;text-align:center;height:12.3px;line-height:12.3px;font-size:8.8px;color:#000;font-weight:400;letter-spacing:-0.15px;white-space:nowrap;">-16,818</div>
<div style="position:absolute;left:539px;top:138.9px;width:60px;text-align:center;height:12.3px;line-height:12.3px;font-size:8.8px;color:#000;font-weight:400;letter-spacing:-0.15px;white-space:nowrap;">-16,818</div>
<div style="position:absolute;left:585.75px;top:138.9px;width:60px;text-align:center;height:12.3px;line-height:12.3px;font-size:8.8px;color:#000;font-weight:400;letter-spacing:-0.15px;white-space:nowrap;">-16,818</div>
<div style="position:absolute;left:632.25px;top:138.9px;width:60px;text-align:center;height:12.3px;line-height:12.3px;font-size:8.8px;color:#000;font-weight:400;letter-spacing:-0.15px;white-space:nowrap;">-16,818</div>
<div style="position:absolute;left:678.5px;top:138.9px;width:60px;text-align:center;height:12.3px;line-height:12.3px;font-size:8.8px;color:#000;font-weight:400;letter-spacing:-0.15px;white-space:nowrap;">-16,818</div>
<div style="position:absolute;left:724.75px;top:138.9px;width:60px;text-align:center;height:12.3px;line-height:12.3px;font-size:8.8px;color:#000;font-weight:400;letter-spacing:-0.15px;white-space:nowrap;">-16,818</div>
<div style="position:absolute;left:771.25px;top:138.9px;width:60px;text-align:center;height:12.3px;line-height:12.3px;font-size:8.8px;color:#000;font-weight:400;letter-spacing:-0.15px;white-space:nowrap;">-16,818</div>
<div style="position:absolute;left:817px;top:138.9px;width:60px;text-align:center;height:12.3px;line-height:12.3px;font-size:8.8px;color:#000;font-weight:400;letter-spacing:-0.15px;white-space:nowrap;">-16,818</div>
<div style="position:absolute;left:861.75px;top:138.9px;width:60px;text-align:center;height:12.3px;line-height:12.3px;font-size:8.8px;color:#000;font-weight:400;letter-spacing:-0.15px;white-space:nowrap;">-16,818</div>
<div style="position:absolute;left:906.25px;top:138.9px;width:60px;text-align:center;height:12.3px;line-height:12.3px;font-size:8.8px;color:#000;font-weight:400;letter-spacing:-0.15px;white-space:nowrap;">-16,818</div>
<div style="position:absolute;left:951.25px;top:138.9px;width:60px;text-align:center;height:12.3px;line-height:12.3px;font-size:8.8px;color:#000;font-weight:400;letter-spacing:-0.15px;white-space:nowrap;">-16,818</div>
<div style="position:absolute;left:31.1px;top:151.18px;height:12.3px;line-height:12.3px;font-size:8.8px;color:#000;font-weight:400;letter-spacing:-0.15px;white-space:nowrap;overflow:hidden;width:180px;">Operating Cash Flows</div>
<div style="position:absolute;left:151.5px;top:151.18px;width:60px;text-align:center;height:12.3px;line-height:12.3px;font-size:8.8px;color:#000;font-weight:400;letter-spacing:-0.15px;white-space:nowrap;">330,157</div>
<div style="position:absolute;left:206px;top:151.18px;width:60px;text-align:center;height:12.3px;line-height:12.3px;font-size:8.8px;color:#000;font-weight:400;letter-spacing:-0.15px;white-space:nowrap;">479,812</div>
<div style="position:absolute;left:258.5px;top:151.18px;width:60px;text-align:center;height:12.3px;line-height:12.3px;font-size:8.8px;color:#000;font-weight:400;letter-spacing:-0.15px;white-space:nowrap;">533,851</div>
<div style="position:absolute;left:312.25px;top:151.18px;width:60px;text-align:center;height:12.3px;line-height:12.3px;font-size:8.8px;color:#000;font-weight:400;letter-spacing:-0.15px;white-space:nowrap;">803,605</div>
<div style="position:absolute;left:365.75px;top:151.18px;width:60px;text-align:center;height:12.3px;line-height:12.3px;font-size:8.8px;color:#000;font-weight:400;letter-spacing:-0.15px;white-space:nowrap;">903,056</div>
<div style="position:absolute;left:439.25px;top:151.18px;width:60px;text-align:center;height:12.3px;line-height:12.3px;font-size:8.8px;color:#000;font-weight:400;letter-spacing:-0.15px;white-space:nowrap;">197,161</div>
<div style="position:absolute;left:492px;top:151.18px;width:60px;text-align:center;height:12.3px;line-height:12.3px;font-size:8.8px;color:#000;font-weight:400;letter-spacing:-0.15px;white-space:nowrap;">280,961</div>
<div style="position:absolute;left:539px;top:151.18px;width:60px;text-align:center;height:12.3px;line-height:12.3px;font-size:8.8px;color:#000;font-weight:400;letter-spacing:-0.15px;white-space:nowrap;">229,444</div>
<div style="position:absolute;left:585.75px;top:151.18px;width:60px;text-align:center;height:12.3px;line-height:12.3px;font-size:8.8px;color:#000;font-weight:400;letter-spacing:-0.15px;white-space:nowrap;">304,168</div>
<div style="position:absolute;left:632.25px;top:151.18px;width:60px;text-align:center;height:12.3px;line-height:12.3px;font-size:8.8px;color:#000;font-weight:400;letter-spacing:-0.15px;white-space:nowrap;">240,119</div>
<div style="position:absolute;left:678.5px;top:151.18px;width:60px;text-align:center;height:12.3px;line-height:12.3px;font-size:8.8px;color:#000;font-weight:400;letter-spacing:-0.15px;white-space:nowrap;">263,719</div>
<div style="position:absolute;left:724.75px;top:151.18px;width:60px;text-align:center;height:12.3px;line-height:12.3px;font-size:8.8px;color:#000;font-weight:400;letter-spacing:-0.15px;white-space:nowrap;">250,231</div>
<div style="position:absolute;left:771.25px;top:151.18px;width:60px;text-align:center;height:12.3px;line-height:12.3px;font-size:8.8px;color:#000;font-weight:400;letter-spacing:-0.15px;white-space:nowrap;">269,186</div>
<div style="position:absolute;left:817px;top:151.18px;width:60px;text-align:center;height:12.3px;line-height:12.3px;font-size:8.8px;color:#000;font-weight:400;letter-spacing:-0.15px;white-space:nowrap;">277,914</div>
<div style="position:absolute;left:861.75px;top:151.18px;width:60px;text-align:center;height:12.3px;line-height:12.3px;font-size:8.8px;color:#000;font-weight:400;letter-spacing:-0.15px;white-space:nowrap;">316,697</div>
<div style="position:absolute;left:906.25px;top:151.18px;width:60px;text-align:center;height:12.3px;line-height:12.3px;font-size:8.8px;color:#000;font-weight:400;letter-spacing:-0.15px;white-space:nowrap;">325,657</div>
<div style="position:absolute;left:951.25px;top:151.18px;width:60px;text-align:center;height:12.3px;line-height:12.3px;font-size:8.8px;color:#000;font-weight:400;letter-spacing:-0.15px;white-space:nowrap;">330,157</div>
<div style="position:absolute;left:31.1px;top:163.46px;height:12.3px;line-height:12.3px;font-size:8.8px;color:#000;font-weight:400;letter-spacing:-0.15px;white-space:nowrap;overflow:hidden;width:180px;">Capital Expenditure</div>
<div style="position:absolute;left:151.5px;top:163.46px;width:60px;text-align:center;height:12.3px;line-height:12.3px;font-size:8.8px;color:#000;font-weight:400;letter-spacing:-0.15px;white-space:nowrap;">-24,230</div>
<div style="position:absolute;left:206px;top:163.46px;width:60px;text-align:center;height:12.3px;line-height:12.3px;font-size:8.8px;color:#000;font-weight:400;letter-spacing:-0.15px;white-space:nowrap;">-24,230</div>
<div style="position:absolute;left:258.5px;top:163.46px;width:60px;text-align:center;height:12.3px;line-height:12.3px;font-size:8.8px;color:#000;font-weight:400;letter-spacing:-0.15px;white-space:nowrap;">-24,230</div>
<div style="position:absolute;left:312.25px;top:163.46px;width:60px;text-align:center;height:12.3px;line-height:12.3px;font-size:8.8px;color:#000;font-weight:400;letter-spacing:-0.15px;white-space:nowrap;">-24,230</div>
<div style="position:absolute;left:365.75px;top:163.46px;width:60px;text-align:center;height:12.3px;line-height:12.3px;font-size:8.8px;color:#000;font-weight:400;letter-spacing:-0.15px;white-space:nowrap;">-24,230</div>
<div style="position:absolute;left:439.25px;top:163.46px;width:60px;text-align:center;height:12.3px;line-height:12.3px;font-size:8.8px;color:#000;font-weight:400;letter-spacing:-0.15px;white-space:nowrap;">-22,185</div>
<div style="position:absolute;left:492px;top:163.46px;width:60px;text-align:center;height:12.3px;line-height:12.3px;font-size:8.8px;color:#000;font-weight:400;letter-spacing:-0.15px;white-space:nowrap;">-1,695</div>
<div style="position:absolute;left:539px;top:163.46px;width:60px;text-align:center;height:12.3px;line-height:12.3px;font-size:8.8px;color:#000;font-weight:400;letter-spacing:-0.15px;white-space:nowrap;">-245</div>
<div style="position:absolute;left:585.75px;top:163.46px;width:60px;text-align:center;height:12.3px;line-height:12.3px;font-size:8.8px;color:#000;font-weight:400;letter-spacing:-0.15px;white-space:nowrap;">-35</div>
<div style="position:absolute;left:632.25px;top:163.46px;width:60px;text-align:center;height:12.3px;line-height:12.3px;font-size:8.8px;color:#000;font-weight:400;letter-spacing:-0.15px;white-space:nowrap;">-35</div>
<div style="position:absolute;left:678.5px;top:163.46px;width:60px;text-align:center;height:12.3px;line-height:12.3px;font-size:8.8px;color:#000;font-weight:400;letter-spacing:-0.15px;white-space:nowrap;">-35</div>
<div style="position:absolute;left:724.75px;top:163.46px;width:60px;text-align:center;height:12.3px;line-height:12.3px;font-size:8.8px;color:#000;font-weight:400;letter-spacing:-0.15px;white-space:nowrap;">0</div>
<div style="position:absolute;left:771.25px;top:163.46px;width:60px;text-align:center;height:12.3px;line-height:12.3px;font-size:8.8px;color:#000;font-weight:400;letter-spacing:-0.15px;white-space:nowrap;">0</div>
<div style="position:absolute;left:817px;top:163.46px;width:60px;text-align:center;height:12.3px;line-height:12.3px;font-size:8.8px;color:#000;font-weight:400;letter-spacing:-0.15px;white-space:nowrap;">0</div>
<div style="position:absolute;left:861.75px;top:163.46px;width:60px;text-align:center;height:12.3px;line-height:12.3px;font-size:8.8px;color:#000;font-weight:400;letter-spacing:-0.15px;white-space:nowrap;">0</div>
<div style="position:absolute;left:906.25px;top:163.46px;width:60px;text-align:center;height:12.3px;line-height:12.3px;font-size:8.8px;color:#000;font-weight:400;letter-spacing:-0.15px;white-space:nowrap;">0</div>
<div style="position:absolute;left:951.25px;top:163.46px;width:60px;text-align:center;height:12.3px;line-height:12.3px;font-size:8.8px;color:#000;font-weight:400;letter-spacing:-0.15px;white-space:nowrap;">0</div>
<div style="position:absolute;left:31.1px;top:175.74px;height:12.3px;line-height:12.3px;font-size:8.8px;color:#000;font-weight:400;letter-spacing:-0.15px;white-space:nowrap;overflow:hidden;width:180px;">Other Investing Cash Flows</div>
<div style="position:absolute;left:151.5px;top:175.74px;width:60px;text-align:center;height:12.3px;line-height:12.3px;font-size:8.8px;color:#000;font-weight:400;letter-spacing:-0.15px;white-space:nowrap;">-</div>
<div style="position:absolute;left:206px;top:175.74px;width:60px;text-align:center;height:12.3px;line-height:12.3px;font-size:8.8px;color:#000;font-weight:400;letter-spacing:-0.15px;white-space:nowrap;">-</div>
<div style="position:absolute;left:258.5px;top:175.74px;width:60px;text-align:center;height:12.3px;line-height:12.3px;font-size:8.8px;color:#000;font-weight:400;letter-spacing:-0.15px;white-space:nowrap;">-</div>
<div style="position:absolute;left:312.25px;top:175.74px;width:60px;text-align:center;height:12.3px;line-height:12.3px;font-size:8.8px;color:#000;font-weight:400;letter-spacing:-0.15px;white-space:nowrap;">-</div>
<div style="position:absolute;left:365.75px;top:175.74px;width:60px;text-align:center;height:12.3px;line-height:12.3px;font-size:8.8px;color:#000;font-weight:400;letter-spacing:-0.15px;white-space:nowrap;">-</div>
<div style="position:absolute;left:439.25px;top:175.74px;width:60px;text-align:center;height:12.3px;line-height:12.3px;font-size:8.8px;color:#000;font-weight:400;letter-spacing:-0.15px;white-space:nowrap;">-</div>
<div style="position:absolute;left:492px;top:175.74px;width:60px;text-align:center;height:12.3px;line-height:12.3px;font-size:8.8px;color:#000;font-weight:400;letter-spacing:-0.15px;white-space:nowrap;">-</div>
<div style="position:absolute;left:539px;top:175.74px;width:60px;text-align:center;height:12.3px;line-height:12.3px;font-size:8.8px;color:#000;font-weight:400;letter-spacing:-0.15px;white-space:nowrap;">-</div>
<div style="position:absolute;left:585.75px;top:175.74px;width:60px;text-align:center;height:12.3px;line-height:12.3px;font-size:8.8px;color:#000;font-weight:400;letter-spacing:-0.15px;white-space:nowrap;">-</div>
<div style="position:absolute;left:632.25px;top:175.74px;width:60px;text-align:center;height:12.3px;line-height:12.3px;font-size:8.8px;color:#000;font-weight:400;letter-spacing:-0.15px;white-space:nowrap;">-</div>
<div style="position:absolute;left:678.5px;top:175.74px;width:60px;text-align:center;height:12.3px;line-height:12.3px;font-size:8.8px;color:#000;font-weight:400;letter-spacing:-0.15px;white-space:nowrap;">-</div>
<div style="position:absolute;left:724.75px;top:175.74px;width:60px;text-align:center;height:12.3px;line-height:12.3px;font-size:8.8px;color:#000;font-weight:400;letter-spacing:-0.15px;white-space:nowrap;">-</div>
<div style="position:absolute;left:771.25px;top:175.74px;width:60px;text-align:center;height:12.3px;line-height:12.3px;font-size:8.8px;color:#000;font-weight:400;letter-spacing:-0.15px;white-space:nowrap;">-</div>
<div style="position:absolute;left:817px;top:175.74px;width:60px;text-align:center;height:12.3px;line-height:12.3px;font-size:8.8px;color:#000;font-weight:400;letter-spacing:-0.15px;white-space:nowrap;">-</div>
<div style="position:absolute;left:861.75px;top:175.74px;width:60px;text-align:center;height:12.3px;line-height:12.3px;font-size:8.8px;color:#000;font-weight:400;letter-spacing:-0.15px;white-space:nowrap;">-</div>
<div style="position:absolute;left:906.25px;top:175.74px;width:60px;text-align:center;height:12.3px;line-height:12.3px;font-size:8.8px;color:#000;font-weight:400;letter-spacing:-0.15px;white-space:nowrap;">-</div>
<div style="position:absolute;left:951.25px;top:175.74px;width:60px;text-align:center;height:12.3px;line-height:12.3px;font-size:8.8px;color:#000;font-weight:400;letter-spacing:-0.15px;white-space:nowrap;">-</div>
<div style="position:absolute;left:31.1px;top:188.02px;height:12.3px;line-height:12.3px;font-size:8.8px;color:#000;font-weight:400;letter-spacing:-0.15px;white-space:nowrap;overflow:hidden;width:180px;">Investing Cash Flows</div>
<div style="position:absolute;left:151.5px;top:188.02px;width:60px;text-align:center;height:12.3px;line-height:12.3px;font-size:8.8px;color:#000;font-weight:400;letter-spacing:-0.15px;white-space:nowrap;">-</div>
<div style="position:absolute;left:206px;top:188.02px;width:60px;text-align:center;height:12.3px;line-height:12.3px;font-size:8.8px;color:#000;font-weight:400;letter-spacing:-0.15px;white-space:nowrap;">-</div>
<div style="position:absolute;left:258.5px;top:188.02px;width:60px;text-align:center;height:12.3px;line-height:12.3px;font-size:8.8px;color:#000;font-weight:400;letter-spacing:-0.15px;white-space:nowrap;">-</div>
<div style="position:absolute;left:312.25px;top:188.02px;width:60px;text-align:center;height:12.3px;line-height:12.3px;font-size:8.8px;color:#000;font-weight:400;letter-spacing:-0.15px;white-space:nowrap;">-</div>
<div style="position:absolute;left:365.75px;top:188.02px;width:60px;text-align:center;height:12.3px;line-height:12.3px;font-size:8.8px;color:#000;font-weight:400;letter-spacing:-0.15px;white-space:nowrap;">-</div>
<div style="position:absolute;left:439.25px;top:188.02px;width:60px;text-align:center;height:12.3px;line-height:12.3px;font-size:8.8px;color:#000;font-weight:400;letter-spacing:-0.15px;white-space:nowrap;">-350,000</div>
<div style="position:absolute;left:492px;top:188.02px;width:60px;text-align:center;height:12.3px;line-height:12.3px;font-size:8.8px;color:#000;font-weight:400;letter-spacing:-0.15px;white-space:nowrap;">-</div>
<div style="position:absolute;left:539px;top:188.02px;width:60px;text-align:center;height:12.3px;line-height:12.3px;font-size:8.8px;color:#000;font-weight:400;letter-spacing:-0.15px;white-space:nowrap;">-</div>
<div style="position:absolute;left:585.75px;top:188.02px;width:60px;text-align:center;height:12.3px;line-height:12.3px;font-size:8.8px;color:#000;font-weight:400;letter-spacing:-0.15px;white-space:nowrap;">-</div>
<div style="position:absolute;left:632.25px;top:188.02px;width:60px;text-align:center;height:12.3px;line-height:12.3px;font-size:8.8px;color:#000;font-weight:400;letter-spacing:-0.15px;white-space:nowrap;">-</div>
<div style="position:absolute;left:678.5px;top:188.02px;width:60px;text-align:center;height:12.3px;line-height:12.3px;font-size:8.8px;color:#000;font-weight:400;letter-spacing:-0.15px;white-space:nowrap;">-</div>
<div style="position:absolute;left:724.75px;top:188.02px;width:60px;text-align:center;height:12.3px;line-height:12.3px;font-size:8.8px;color:#000;font-weight:400;letter-spacing:-0.15px;white-space:nowrap;">-</div>
<div style="position:absolute;left:771.25px;top:188.02px;width:60px;text-align:center;height:12.3px;line-height:12.3px;font-size:8.8px;color:#000;font-weight:400;letter-spacing:-0.15px;white-space:nowrap;">-</div>
<div style="position:absolute;left:817px;top:188.02px;width:60px;text-align:center;height:12.3px;line-height:12.3px;font-size:8.8px;color:#000;font-weight:400;letter-spacing:-0.15px;white-space:nowrap;">-</div>
<div style="position:absolute;left:861.75px;top:188.02px;width:60px;text-align:center;height:12.3px;line-height:12.3px;font-size:8.8px;color:#000;font-weight:400;letter-spacing:-0.15px;white-space:nowrap;">-</div>
<div style="position:absolute;left:906.25px;top:188.02px;width:60px;text-align:center;height:12.3px;line-height:12.3px;font-size:8.8px;color:#000;font-weight:400;letter-spacing:-0.15px;white-space:nowrap;">-</div>
<div style="position:absolute;left:951.25px;top:188.02px;width:60px;text-align:center;height:12.3px;line-height:12.3px;font-size:8.8px;color:#000;font-weight:400;letter-spacing:-0.15px;white-space:nowrap;">-</div>
<div style="position:absolute;left:31.1px;top:200.3px;height:12.3px;line-height:12.3px;font-size:8.8px;color:#000;font-weight:400;letter-spacing:-0.15px;white-space:nowrap;overflow:hidden;width:121.4px;">Debt Drawdowns/(Repayments</div>
<div style="position:absolute;left:151.5px;top:200.3px;width:60px;text-align:center;height:12.3px;line-height:12.3px;font-size:8.8px;color:#000;font-weight:400;letter-spacing:-0.15px;white-space:nowrap;">-16,818</div>
<div style="position:absolute;left:206px;top:200.3px;width:60px;text-align:center;height:12.3px;line-height:12.3px;font-size:8.8px;color:#000;font-weight:400;letter-spacing:-0.15px;white-space:nowrap;">-16,818</div>
<div style="position:absolute;left:258.5px;top:200.3px;width:60px;text-align:center;height:12.3px;line-height:12.3px;font-size:8.8px;color:#000;font-weight:400;letter-spacing:-0.15px;white-space:nowrap;">0</div>
<div style="position:absolute;left:312.25px;top:200.3px;width:60px;text-align:center;height:12.3px;line-height:12.3px;font-size:8.8px;color:#000;font-weight:400;letter-spacing:-0.15px;white-space:nowrap;">0</div>
<div style="position:absolute;left:365.75px;top:200.3px;width:60px;text-align:center;height:12.3px;line-height:12.3px;font-size:8.8px;color:#000;font-weight:400;letter-spacing:-0.15px;white-space:nowrap;">0</div>
<div style="position:absolute;left:439.25px;top:200.3px;width:60px;text-align:center;height:12.3px;line-height:12.3px;font-size:8.8px;color:#000;font-weight:400;letter-spacing:-0.15px;white-space:nowrap;">-</div>
<div style="position:absolute;left:492px;top:200.3px;width:60px;text-align:center;height:12.3px;line-height:12.3px;font-size:8.8px;color:#000;font-weight:400;letter-spacing:-0.15px;white-space:nowrap;">-16,818</div>
<div style="position:absolute;left:539px;top:200.3px;width:60px;text-align:center;height:12.3px;line-height:12.3px;font-size:8.8px;color:#000;font-weight:400;letter-spacing:-0.15px;white-space:nowrap;">-16,818</div>
<div style="position:absolute;left:585.75px;top:200.3px;width:60px;text-align:center;height:12.3px;line-height:12.3px;font-size:8.8px;color:#000;font-weight:400;letter-spacing:-0.15px;white-space:nowrap;">-16,818</div>
<div style="position:absolute;left:632.25px;top:200.3px;width:60px;text-align:center;height:12.3px;line-height:12.3px;font-size:8.8px;color:#000;font-weight:400;letter-spacing:-0.15px;white-space:nowrap;">-16,818</div>
<div style="position:absolute;left:678.5px;top:200.3px;width:60px;text-align:center;height:12.3px;line-height:12.3px;font-size:8.8px;color:#000;font-weight:400;letter-spacing:-0.15px;white-space:nowrap;">-16,818</div>
<div style="position:absolute;left:724.75px;top:200.3px;width:60px;text-align:center;height:12.3px;line-height:12.3px;font-size:8.8px;color:#000;font-weight:400;letter-spacing:-0.15px;white-space:nowrap;">-16,818</div>
<div style="position:absolute;left:771.25px;top:200.3px;width:60px;text-align:center;height:12.3px;line-height:12.3px;font-size:8.8px;color:#000;font-weight:400;letter-spacing:-0.15px;white-space:nowrap;">-16,818</div>
<div style="position:absolute;left:817px;top:200.3px;width:60px;text-align:center;height:12.3px;line-height:12.3px;font-size:8.8px;color:#000;font-weight:400;letter-spacing:-0.15px;white-space:nowrap;">-16,818</div>
<div style="position:absolute;left:861.75px;top:200.3px;width:60px;text-align:center;height:12.3px;line-height:12.3px;font-size:8.8px;color:#000;font-weight:400;letter-spacing:-0.15px;white-space:nowrap;">-16,818</div>
<div style="position:absolute;left:906.25px;top:200.3px;width:60px;text-align:center;height:12.3px;line-height:12.3px;font-size:8.8px;color:#000;font-weight:400;letter-spacing:-0.15px;white-space:nowrap;">-16,818</div>
<div style="position:absolute;left:951.25px;top:200.3px;width:60px;text-align:center;height:12.3px;line-height:12.3px;font-size:8.8px;color:#000;font-weight:400;letter-spacing:-0.15px;white-space:nowrap;">-16,818</div>
<div style="position:absolute;left:31.1px;top:212.58px;height:12.3px;line-height:12.3px;font-size:8.8px;color:#000;font-weight:400;letter-spacing:-0.15px;white-space:nowrap;overflow:hidden;width:180px;">Equity Raisings/(Buybacks)</div>
<div style="position:absolute;left:151.5px;top:212.58px;width:60px;text-align:center;height:12.3px;line-height:12.3px;font-size:8.8px;color:#000;font-weight:400;letter-spacing:-0.15px;white-space:nowrap;">-</div>
<div style="position:absolute;left:206px;top:212.58px;width:60px;text-align:center;height:12.3px;line-height:12.3px;font-size:8.8px;color:#000;font-weight:400;letter-spacing:-0.15px;white-space:nowrap;">-</div>
<div style="position:absolute;left:258.5px;top:212.58px;width:60px;text-align:center;height:12.3px;line-height:12.3px;font-size:8.8px;color:#000;font-weight:400;letter-spacing:-0.15px;white-space:nowrap;">-</div>
<div style="position:absolute;left:312.25px;top:212.58px;width:60px;text-align:center;height:12.3px;line-height:12.3px;font-size:8.8px;color:#000;font-weight:400;letter-spacing:-0.15px;white-space:nowrap;">-</div>
<div style="position:absolute;left:365.75px;top:212.58px;width:60px;text-align:center;height:12.3px;line-height:12.3px;font-size:8.8px;color:#000;font-weight:400;letter-spacing:-0.15px;white-space:nowrap;">-</div>
<div style="position:absolute;left:439.25px;top:212.58px;width:60px;text-align:center;height:12.3px;line-height:12.3px;font-size:8.8px;color:#000;font-weight:400;letter-spacing:-0.15px;white-space:nowrap;">-</div>
<div style="position:absolute;left:492px;top:212.58px;width:60px;text-align:center;height:12.3px;line-height:12.3px;font-size:8.8px;color:#000;font-weight:400;letter-spacing:-0.15px;white-space:nowrap;">-</div>
<div style="position:absolute;left:539px;top:212.58px;width:60px;text-align:center;height:12.3px;line-height:12.3px;font-size:8.8px;color:#000;font-weight:400;letter-spacing:-0.15px;white-space:nowrap;">-</div>
<div style="position:absolute;left:585.75px;top:212.58px;width:60px;text-align:center;height:12.3px;line-height:12.3px;font-size:8.8px;color:#000;font-weight:400;letter-spacing:-0.15px;white-space:nowrap;">-</div>
<div style="position:absolute;left:632.25px;top:212.58px;width:60px;text-align:center;height:12.3px;line-height:12.3px;font-size:8.8px;color:#000;font-weight:400;letter-spacing:-0.15px;white-space:nowrap;">-</div>
<div style="position:absolute;left:678.5px;top:212.58px;width:60px;text-align:center;height:12.3px;line-height:12.3px;font-size:8.8px;color:#000;font-weight:400;letter-spacing:-0.15px;white-space:nowrap;">-</div>
<div style="position:absolute;left:724.75px;top:212.58px;width:60px;text-align:center;height:12.3px;line-height:12.3px;font-size:8.8px;color:#000;font-weight:400;letter-spacing:-0.15px;white-space:nowrap;">-</div>
<div style="position:absolute;left:771.25px;top:212.58px;width:60px;text-align:center;height:12.3px;line-height:12.3px;font-size:8.8px;color:#000;font-weight:400;letter-spacing:-0.15px;white-space:nowrap;">-</div>
<div style="position:absolute;left:817px;top:212.58px;width:60px;text-align:center;height:12.3px;line-height:12.3px;font-size:8.8px;color:#000;font-weight:400;letter-spacing:-0.15px;white-space:nowrap;">-</div>
<div style="position:absolute;left:861.75px;top:212.58px;width:60px;text-align:center;height:12.3px;line-height:12.3px;font-size:8.8px;color:#000;font-weight:400;letter-spacing:-0.15px;white-space:nowrap;">-</div>
<div style="position:absolute;left:906.25px;top:212.58px;width:60px;text-align:center;height:12.3px;line-height:12.3px;font-size:8.8px;color:#000;font-weight:400;letter-spacing:-0.15px;white-space:nowrap;">-</div>
<div style="position:absolute;left:951.25px;top:212.58px;width:60px;text-align:center;height:12.3px;line-height:12.3px;font-size:8.8px;color:#000;font-weight:400;letter-spacing:-0.15px;white-space:nowrap;">-</div>
<div style="position:absolute;left:31.1px;top:224.86px;height:12.3px;line-height:12.3px;font-size:8.8px;color:#000;font-weight:400;letter-spacing:-0.15px;white-space:nowrap;overflow:hidden;width:180px;">Other Financing Cash Flows</div>
<div style="position:absolute;left:151.5px;top:224.86px;width:60px;text-align:center;height:12.3px;line-height:12.3px;font-size:8.8px;color:#000;font-weight:400;letter-spacing:-0.15px;white-space:nowrap;">-</div>
<div style="position:absolute;left:206px;top:224.86px;width:60px;text-align:center;height:12.3px;line-height:12.3px;font-size:8.8px;color:#000;font-weight:400;letter-spacing:-0.15px;white-space:nowrap;">-</div>
<div style="position:absolute;left:258.5px;top:224.86px;width:60px;text-align:center;height:12.3px;line-height:12.3px;font-size:8.8px;color:#000;font-weight:400;letter-spacing:-0.15px;white-space:nowrap;">-</div>
<div style="position:absolute;left:312.25px;top:224.86px;width:60px;text-align:center;height:12.3px;line-height:12.3px;font-size:8.8px;color:#000;font-weight:400;letter-spacing:-0.15px;white-space:nowrap;">-</div>
<div style="position:absolute;left:365.75px;top:224.86px;width:60px;text-align:center;height:12.3px;line-height:12.3px;font-size:8.8px;color:#000;font-weight:400;letter-spacing:-0.15px;white-space:nowrap;">-</div>
<div style="position:absolute;left:439.25px;top:224.86px;width:60px;text-align:center;height:12.3px;line-height:12.3px;font-size:8.8px;color:#000;font-weight:400;letter-spacing:-0.15px;white-space:nowrap;">-</div>
<div style="position:absolute;left:492px;top:224.86px;width:60px;text-align:center;height:12.3px;line-height:12.3px;font-size:8.8px;color:#000;font-weight:400;letter-spacing:-0.15px;white-space:nowrap;">-</div>
<div style="position:absolute;left:539px;top:224.86px;width:60px;text-align:center;height:12.3px;line-height:12.3px;font-size:8.8px;color:#000;font-weight:400;letter-spacing:-0.15px;white-space:nowrap;">-</div>
<div style="position:absolute;left:585.75px;top:224.86px;width:60px;text-align:center;height:12.3px;line-height:12.3px;font-size:8.8px;color:#000;font-weight:400;letter-spacing:-0.15px;white-space:nowrap;">-</div>
<div style="position:absolute;left:632.25px;top:224.86px;width:60px;text-align:center;height:12.3px;line-height:12.3px;font-size:8.8px;color:#000;font-weight:400;letter-spacing:-0.15px;white-space:nowrap;">-</div>
<div style="position:absolute;left:678.5px;top:224.86px;width:60px;text-align:center;height:12.3px;line-height:12.3px;font-size:8.8px;color:#000;font-weight:400;letter-spacing:-0.15px;white-space:nowrap;">-</div>
<div style="position:absolute;left:724.75px;top:224.86px;width:60px;text-align:center;height:12.3px;line-height:12.3px;font-size:8.8px;color:#000;font-weight:400;letter-spacing:-0.15px;white-space:nowrap;">-</div>
<div style="position:absolute;left:771.25px;top:224.86px;width:60px;text-align:center;height:12.3px;line-height:12.3px;font-size:8.8px;color:#000;font-weight:400;letter-spacing:-0.15px;white-space:nowrap;">-</div>
<div style="position:absolute;left:817px;top:224.86px;width:60px;text-align:center;height:12.3px;line-height:12.3px;font-size:8.8px;color:#000;font-weight:400;letter-spacing:-0.15px;white-space:nowrap;">-</div>
<div style="position:absolute;left:861.75px;top:224.86px;width:60px;text-align:center;height:12.3px;line-height:12.3px;font-size:8.8px;color:#000;font-weight:400;letter-spacing:-0.15px;white-space:nowrap;">-</div>
<div style="position:absolute;left:906.25px;top:224.86px;width:60px;text-align:center;height:12.3px;line-height:12.3px;font-size:8.8px;color:#000;font-weight:400;letter-spacing:-0.15px;white-space:nowrap;">-</div>
<div style="position:absolute;left:951.25px;top:224.86px;width:60px;text-align:center;height:12.3px;line-height:12.3px;font-size:8.8px;color:#000;font-weight:400;letter-spacing:-0.15px;white-space:nowrap;">-</div>
<div style="position:absolute;left:31.1px;top:237.14px;height:12.3px;line-height:12.3px;font-size:8.8px;color:#000;font-weight:400;letter-spacing:-0.15px;white-space:nowrap;overflow:hidden;width:180px;">Financing Cash Flows</div>
<div style="position:absolute;left:151.5px;top:237.14px;width:60px;text-align:center;height:12.3px;line-height:12.3px;font-size:8.8px;color:#000;font-weight:400;letter-spacing:-0.15px;white-space:nowrap;">-16,818</div>
<div style="position:absolute;left:206px;top:237.14px;width:60px;text-align:center;height:12.3px;line-height:12.3px;font-size:8.8px;color:#000;font-weight:400;letter-spacing:-0.15px;white-space:nowrap;">-16,818</div>
<div style="position:absolute;left:258.5px;top:237.14px;width:60px;text-align:center;height:12.3px;line-height:12.3px;font-size:8.8px;color:#000;font-weight:400;letter-spacing:-0.15px;white-space:nowrap;">0</div>
<div style="position:absolute;left:312.25px;top:237.14px;width:60px;text-align:center;height:12.3px;line-height:12.3px;font-size:8.8px;color:#000;font-weight:400;letter-spacing:-0.15px;white-space:nowrap;">0</div>
<div style="position:absolute;left:365.75px;top:237.14px;width:60px;text-align:center;height:12.3px;line-height:12.3px;font-size:8.8px;color:#000;font-weight:400;letter-spacing:-0.15px;white-space:nowrap;">0</div>
<div style="position:absolute;left:439.25px;top:237.14px;width:60px;text-align:center;height:12.3px;line-height:12.3px;font-size:8.8px;color:#000;font-weight:400;letter-spacing:-0.15px;white-space:nowrap;">-</div>
<div style="position:absolute;left:492px;top:237.14px;width:60px;text-align:center;height:12.3px;line-height:12.3px;font-size:8.8px;color:#000;font-weight:400;letter-spacing:-0.15px;white-space:nowrap;">-16,818</div>
<div style="position:absolute;left:539px;top:237.14px;width:60px;text-align:center;height:12.3px;line-height:12.3px;font-size:8.8px;color:#000;font-weight:400;letter-spacing:-0.15px;white-space:nowrap;">-16,818</div>
<div style="position:absolute;left:585.75px;top:237.14px;width:60px;text-align:center;height:12.3px;line-height:12.3px;font-size:8.8px;color:#000;font-weight:400;letter-spacing:-0.15px;white-space:nowrap;">-16,818</div>
<div style="position:absolute;left:632.25px;top:237.14px;width:60px;text-align:center;height:12.3px;line-height:12.3px;font-size:8.8px;color:#000;font-weight:400;letter-spacing:-0.15px;white-space:nowrap;">-16,818</div>
<div style="position:absolute;left:678.5px;top:237.14px;width:60px;text-align:center;height:12.3px;line-height:12.3px;font-size:8.8px;color:#000;font-weight:400;letter-spacing:-0.15px;white-space:nowrap;">-16,818</div>
<div style="position:absolute;left:724.75px;top:237.14px;width:60px;text-align:center;height:12.3px;line-height:12.3px;font-size:8.8px;color:#000;font-weight:400;letter-spacing:-0.15px;white-space:nowrap;">-16,818</div>
<div style="position:absolute;left:771.25px;top:237.14px;width:60px;text-align:center;height:12.3px;line-height:12.3px;font-size:8.8px;color:#000;font-weight:400;letter-spacing:-0.15px;white-space:nowrap;">-16,818</div>
<div style="position:absolute;left:817px;top:237.14px;width:60px;text-align:center;height:12.3px;line-height:12.3px;font-size:8.8px;color:#000;font-weight:400;letter-spacing:-0.15px;white-space:nowrap;">-16,818</div>
<div style="position:absolute;left:861.75px;top:237.14px;width:60px;text-align:center;height:12.3px;line-height:12.3px;font-size:8.8px;color:#000;font-weight:400;letter-spacing:-0.15px;white-space:nowrap;">-16,818</div>
<div style="position:absolute;left:906.25px;top:237.14px;width:60px;text-align:center;height:12.3px;line-height:12.3px;font-size:8.8px;color:#000;font-weight:400;letter-spacing:-0.15px;white-space:nowrap;">-16,818</div>
<div style="position:absolute;left:951.25px;top:237.14px;width:60px;text-align:center;height:12.3px;line-height:12.3px;font-size:8.8px;color:#000;font-weight:400;letter-spacing:-0.15px;white-space:nowrap;">-16,818</div>
<div style="position:absolute;left:31.1px;top:249.42px;height:12.3px;line-height:12.3px;font-size:8.8px;color:#000;font-weight:400;letter-spacing:-0.15px;white-space:nowrap;overflow:hidden;width:180px;">Change In Cash Held</div>
<div style="position:absolute;left:151.5px;top:249.42px;width:60px;text-align:center;height:12.3px;line-height:12.3px;font-size:8.8px;color:#000;font-weight:400;letter-spacing:-0.15px;white-space:nowrap;">330,157</div>
<div style="position:absolute;left:206px;top:249.42px;width:60px;text-align:center;height:12.3px;line-height:12.3px;font-size:8.8px;color:#000;font-weight:400;letter-spacing:-0.15px;white-space:nowrap;">479,812</div>
<div style="position:absolute;left:258.5px;top:249.42px;width:60px;text-align:center;height:12.3px;line-height:12.3px;font-size:8.8px;color:#000;font-weight:400;letter-spacing:-0.15px;white-space:nowrap;">533,851</div>
<div style="position:absolute;left:312.25px;top:249.42px;width:60px;text-align:center;height:12.3px;line-height:12.3px;font-size:8.8px;color:#000;font-weight:400;letter-spacing:-0.15px;white-space:nowrap;">803,605</div>
<div style="position:absolute;left:365.75px;top:249.42px;width:60px;text-align:center;height:12.3px;line-height:12.3px;font-size:8.8px;color:#000;font-weight:400;letter-spacing:-0.15px;white-space:nowrap;">903,056</div>
<div style="position:absolute;left:439.25px;top:249.42px;width:60px;text-align:center;height:12.3px;line-height:12.3px;font-size:8.8px;color:#000;font-weight:400;letter-spacing:-0.15px;white-space:nowrap;">-350,000</div>
<div style="position:absolute;left:492px;top:249.42px;width:60px;text-align:center;height:12.3px;line-height:12.3px;font-size:8.8px;color:#000;font-weight:400;letter-spacing:-0.15px;white-space:nowrap;">280,961</div>
<div style="position:absolute;left:539px;top:249.42px;width:60px;text-align:center;height:12.3px;line-height:12.3px;font-size:8.8px;color:#000;font-weight:400;letter-spacing:-0.15px;white-space:nowrap;">229,444</div>
<div style="position:absolute;left:585.75px;top:249.42px;width:60px;text-align:center;height:12.3px;line-height:12.3px;font-size:8.8px;color:#000;font-weight:400;letter-spacing:-0.15px;white-space:nowrap;">304,168</div>
<div style="position:absolute;left:632.25px;top:249.42px;width:60px;text-align:center;height:12.3px;line-height:12.3px;font-size:8.8px;color:#000;font-weight:400;letter-spacing:-0.15px;white-space:nowrap;">240,119</div>
<div style="position:absolute;left:678.5px;top:249.42px;width:60px;text-align:center;height:12.3px;line-height:12.3px;font-size:8.8px;color:#000;font-weight:400;letter-spacing:-0.15px;white-space:nowrap;">263,719</div>
<div style="position:absolute;left:724.75px;top:249.42px;width:60px;text-align:center;height:12.3px;line-height:12.3px;font-size:8.8px;color:#000;font-weight:400;letter-spacing:-0.15px;white-space:nowrap;">250,231</div>
<div style="position:absolute;left:771.25px;top:249.42px;width:60px;text-align:center;height:12.3px;line-height:12.3px;font-size:8.8px;color:#000;font-weight:400;letter-spacing:-0.15px;white-space:nowrap;">269,186</div>
<div style="position:absolute;left:817px;top:249.42px;width:60px;text-align:center;height:12.3px;line-height:12.3px;font-size:8.8px;color:#000;font-weight:400;letter-spacing:-0.15px;white-space:nowrap;">277,914</div>
<div style="position:absolute;left:861.75px;top:249.42px;width:60px;text-align:center;height:12.3px;line-height:12.3px;font-size:8.8px;color:#000;font-weight:400;letter-spacing:-0.15px;white-space:nowrap;">316,697</div>
<div style="position:absolute;left:906.25px;top:249.42px;width:60px;text-align:center;height:12.3px;line-height:12.3px;font-size:8.8px;color:#000;font-weight:400;letter-spacing:-0.15px;white-space:nowrap;">325,657</div>
<div style="position:absolute;left:951.25px;top:249.42px;width:60px;text-align:center;height:12.3px;line-height:12.3px;font-size:8.8px;color:#000;font-weight:400;letter-spacing:-0.15px;white-space:nowrap;">330,157</div>
<div style="position:absolute;left:31.1px;top:261.7px;height:12.3px;line-height:12.3px;font-size:8.8px;color:#000;font-weight:400;letter-spacing:-0.15px;white-space:nowrap;overflow:hidden;width:180px;">Closing Cash</div>
<div style="position:absolute;left:151.5px;top:261.7px;width:60px;text-align:center;height:12.3px;line-height:12.3px;font-size:8.8px;color:#000;font-weight:400;letter-spacing:-0.15px;white-space:nowrap;">643,495</div>
<div style="position:absolute;left:206px;top:261.7px;width:60px;text-align:center;height:12.3px;line-height:12.3px;font-size:8.8px;color:#000;font-weight:400;letter-spacing:-0.15px;white-space:nowrap;">942,807</div>
<div style="position:absolute;left:258.5px;top:261.7px;width:60px;text-align:center;height:12.3px;line-height:12.3px;font-size:8.8px;color:#000;font-weight:400;letter-spacing:-0.15px;white-space:nowrap;">1,067,703</div>
<div style="position:absolute;left:312.25px;top:261.7px;width:60px;text-align:center;height:12.3px;line-height:12.3px;font-size:8.8px;color:#000;font-weight:400;letter-spacing:-0.15px;white-space:nowrap;">1,607,209</div>
<div style="position:absolute;left:365.75px;top:261.7px;width:60px;text-align:center;height:12.3px;line-height:12.3px;font-size:8.8px;color:#000;font-weight:400;letter-spacing:-0.15px;white-space:nowrap;">1,806,111</div>
<div style="position:absolute;left:439.25px;top:261.7px;width:60px;text-align:center;height:12.3px;line-height:12.3px;font-size:8.8px;color:#000;font-weight:400;letter-spacing:-0.15px;white-space:nowrap;">-305,678</div>
<div style="position:absolute;left:492px;top:261.7px;width:60px;text-align:center;height:12.3px;line-height:12.3px;font-size:8.8px;color:#000;font-weight:400;letter-spacing:-0.15px;white-space:nowrap;">545,105</div>
<div style="position:absolute;left:539px;top:261.7px;width:60px;text-align:center;height:12.3px;line-height:12.3px;font-size:8.8px;color:#000;font-weight:400;letter-spacing:-0.15px;white-space:nowrap;">442,070</div>
<div style="position:absolute;left:585.75px;top:261.7px;width:60px;text-align:center;height:12.3px;line-height:12.3px;font-size:8.8px;color:#000;font-weight:400;letter-spacing:-0.15px;white-space:nowrap;">591,518</div>
<div style="position:absolute;left:632.25px;top:261.7px;width:60px;text-align:center;height:12.3px;line-height:12.3px;font-size:8.8px;color:#000;font-weight:400;letter-spacing:-0.15px;white-space:nowrap;">463,421</div>
<div style="position:absolute;left:678.5px;top:261.7px;width:60px;text-align:center;height:12.3px;line-height:12.3px;font-size:8.8px;color:#000;font-weight:400;letter-spacing:-0.15px;white-space:nowrap;">510,620</div>
<div style="position:absolute;left:724.75px;top:261.7px;width:60px;text-align:center;height:12.3px;line-height:12.3px;font-size:8.8px;color:#000;font-weight:400;letter-spacing:-0.15px;white-space:nowrap;">483,643</div>
<div style="position:absolute;left:771.25px;top:261.7px;width:60px;text-align:center;height:12.3px;line-height:12.3px;font-size:8.8px;color:#000;font-weight:400;letter-spacing:-0.15px;white-space:nowrap;">521,554</div>
<div style="position:absolute;left:817px;top:261.7px;width:60px;text-align:center;height:12.3px;line-height:12.3px;font-size:8.8px;color:#000;font-weight:400;letter-spacing:-0.15px;white-space:nowrap;">539,010</div>
<div style="position:absolute;left:861.75px;top:261.7px;width:60px;text-align:center;height:12.3px;line-height:12.3px;font-size:8.8px;color:#000;font-weight:400;letter-spacing:-0.15px;white-space:nowrap;">616,577</div>
<div style="position:absolute;left:906.25px;top:261.7px;width:60px;text-align:center;height:12.3px;line-height:12.3px;font-size:8.8px;color:#000;font-weight:400;letter-spacing:-0.15px;white-space:nowrap;">634,496</div>
<div style="position:absolute;left:951.25px;top:261.7px;width:60px;text-align:center;height:12.3px;line-height:12.3px;font-size:8.8px;color:#000;font-weight:400;letter-spacing:-0.15px;white-space:nowrap;">643,495</div>
<div style="position:absolute;left:28.9px;top:285.76px;width:394.1px;height:12.3px;background:#2F5597;"></div>
<div style="position:absolute;left:31.25px;top:286.26px;height:12.3px;line-height:12.3px;font-size:8.8px;color:#fff;font-weight:700;letter-spacing:-0.24px;white-space:nowrap;">Cash Flow Statement 5 Years to December 2029</div>
<div style="position:absolute;left:440px;top:285.76px;width:564px;height:12.3px;background:#2F5597;"></div>
<div style="position:absolute;left:572px;top:286.26px;width:300px;text-align:center;height:12.3px;line-height:12.3px;font-size:8.8px;color:#fff;font-weight:700;letter-spacing:-0.24px;white-space:nowrap;">Cash Flow Statement Summery 2025</div>
<div style="position:absolute;left:28.9px;top:555.92px;width:975.1px;height:12.6px;background:#2F5597;"></div>
<div style="position:absolute;left:31.25px;top:556.42px;height:12.3px;line-height:12.3px;font-size:8.8px;color:#fff;font-weight:700;letter-spacing:-0.24px;white-space:nowrap;">Income Statement 5 Years to December 2029</div>
<div style="position:absolute;left:572px;top:556.42px;width:300px;text-align:center;height:12.3px;line-height:12.3px;font-size:8.8px;color:#fff;font-weight:700;letter-spacing:-0.24px;white-space:nowrap;">Income Statement Summery 2025</div>
<svg style="position:absolute;left:28.2px;top:303.6px" width="397.3" height="232.3" viewBox="28.2 303.6 397.3 232.3" font-family="Liberation Sans, sans-serif">
<rect x="29.2" y="304.6" width="395.3" height="230.3" fill="#fff" stroke="#D9D9D9" stroke-width="0.9"/>
<line x1="133.5" y1="313.3" x2="414.7" y2="313.3" stroke="#D9D9D9" stroke-width="0.9"/>
<text x="126.6" y="316.1" font-size="6.85" fill="#595959" text-anchor="end">2,000,000</text>
<line x1="133.5" y1="341.8" x2="414.7" y2="341.8" stroke="#D9D9D9" stroke-width="0.9"/>
<text x="126.6" y="344.6" font-size="6.85" fill="#595959" text-anchor="end">1,500,000</text>
<line x1="133.5" y1="370.3" x2="414.7" y2="370.3" stroke="#D9D9D9" stroke-width="0.9"/>
<text x="126.6" y="373.1" font-size="6.85" fill="#595959" text-anchor="end">1,000,000</text>
<line x1="133.5" y1="398.8" x2="414.7" y2="398.8" stroke="#D9D9D9" stroke-width="0.9"/>
<text x="126.6" y="401.6" font-size="6.85" fill="#595959" text-anchor="end">500,000</text>
<line x1="133.5" y1="427.3" x2="414.7" y2="427.3" stroke="#D9D9D9" stroke-width="0.9"/>
<text x="126.6" y="430.1" font-size="6.85" fill="#595959" text-anchor="end">0</text>
<text x="126.6" y="458.6" font-size="6.85" fill="#595959" text-anchor="end">-500,000</text>
<rect x="144.52" y="408.48" width="9.6" height="18.82" fill="#4472C4"/>
<rect x="200.76" y="399.95" width="9.6" height="27.35" fill="#4472C4"/>
<rect x="257" y="396.87" width="9.6" height="30.43" fill="#4472C4"/>
<rect x="313.24" y="381.49" width="9.6" height="45.81" fill="#4472C4"/>
<rect x="369.48" y="375.83" width="9.6" height="51.47" fill="#4472C4"/>
<rect x="169.42" y="427.3" width="9.6" height="0.96" fill="#A5A5A5"/>
<rect x="225.66" y="427.3" width="9.6" height="0.96" fill="#A5A5A5"/>
<polyline points="161.62,408.48 217.86,399.95 274.1,396.87 330.34,381.49 386.58,375.83" fill="none" stroke="#FFC000" stroke-width="2" stroke-linejoin="round" stroke-linecap="round"/>
<polyline points="161.62,390.62 217.86,373.56 274.1,366.44 330.34,335.69 386.58,324.35" fill="none" stroke="#5B9BD5" stroke-width="2" stroke-linejoin="round" stroke-linecap="round"/>
<line x1="133.5" y1="456.6" x2="414.7" y2="456.6" stroke="#D9D9D9" stroke-width="0.9"/>
<line x1="43.5" y1="467.4" x2="414.7" y2="467.4" stroke="#D9D9D9" stroke-width="0.9"/>
<line x1="43.5" y1="480" x2="414.7" y2="480" stroke="#D9D9D9" stroke-width="0.9"/>
<line x1="43.5" y1="492.3" x2="414.7" y2="492.3" stroke="#D9D9D9" stroke-width="0.9"/>
<line x1="43.5" y1="504.6" x2="414.7" y2="504.6" stroke="#D9D9D9" stroke-width="0.9"/>
<line x1="43.5" y1="516.9" x2="414.7" y2="516.9" stroke="#D9D9D9" stroke-width="0.9"/>
<line x1="43.5" y1="529.3" x2="414.7" y2="529.3" stroke="#D9D9D9" stroke-width="0.9"/>
<line x1="43.5" y1="467.4" x2="43.5" y2="529.3" stroke="#D9D9D9" stroke-width="0.9"/>
<line x1="133.5" y1="456.6" x2="133.5" y2="529.3" stroke="#D9D9D9" stroke-width="0.9"/>
<line x1="189.74" y1="456.6" x2="189.74" y2="529.3" stroke="#D9D9D9" stroke-width="0.9"/>
<line x1="245.98" y1="456.6" x2="245.98" y2="529.3" stroke="#D9D9D9" stroke-width="0.9"/>
<line x1="302.22" y1="456.6" x2="302.22" y2="529.3" stroke="#D9D9D9" stroke-width="0.9"/>
<line x1="358.46" y1="456.6" x2="358.46" y2="529.3" stroke="#D9D9D9" stroke-width="0.9"/>
<line x1="414.7" y1="456.6" x2="414.7" y2="529.3" stroke="#D9D9D9" stroke-width="0.9"/>
<text x="161.62" y="464.3" font-size="6.85" fill="#595959" text-anchor="middle">2025</text>
<text x="217.86" y="464.3" font-size="6.85" fill="#595959" text-anchor="middle">2026</text>
<text x="274.1" y="464.3" font-size="6.85" fill="#595959" text-anchor="middle">2027</text>
<text x="330.34" y="464.3" font-size="6.85" fill="#595959" text-anchor="middle">2028</text>
<text x="386.58" y="464.3" font-size="6.85" fill="#595959" text-anchor="middle">2029</text>
<rect x="46" y="471.7" width="16.3" height="4" fill="#4472C4"/>
<text x="64.2" y="476" font-size="6.85" fill="#595959">Operating Cash Flows</text>
<text x="161.62" y="476" font-size="6.85" fill="#595959" text-anchor="middle">330,157</text>
<text x="217.86" y="476" font-size="6.85" fill="#595959" text-anchor="middle">479,812</text>
<text x="274.1" y="476" font-size="6.85" fill="#595959" text-anchor="middle">533,851</text>
<text x="330.34" y="476" font-size="6.85" fill="#595959" text-anchor="middle">803,605</text>
<text x="386.58" y="476" font-size="6.85" fill="#595959" text-anchor="middle">903,056</text>
<rect x="46" y="484.15" width="16.3" height="4" fill="#ED7D31"/>
<text x="64.2" y="488.45" font-size="6.85" fill="#595959">Investing Cash Flows</text>
<text x="161.62" y="488.45" font-size="6.85" fill="#595959" text-anchor="middle">0</text>
<text x="217.86" y="488.45" font-size="6.85" fill="#595959" text-anchor="middle">0</text>
<text x="274.1" y="488.45" font-size="6.85" fill="#595959" text-anchor="middle">0</text>
<text x="330.34" y="488.45" font-size="6.85" fill="#595959" text-anchor="middle">0</text>
<text x="386.58" y="488.45" font-size="6.85" fill="#595959" text-anchor="middle">0</text>
<rect x="46" y="496.45" width="16.3" height="4" fill="#A5A5A5"/>
<text x="64.2" y="500.75" font-size="6.85" fill="#595959">Financing Cash Flows</text>
<text x="161.62" y="500.75" font-size="6.85" fill="#595959" text-anchor="middle">-16,818</text>
<text x="217.86" y="500.75" font-size="6.85" fill="#595959" text-anchor="middle">-16,818</text>
<text x="274.1" y="500.75" font-size="6.85" fill="#595959" text-anchor="middle">0</text>
<text x="330.34" y="500.75" font-size="6.85" fill="#595959" text-anchor="middle">0</text>
<text x="386.58" y="500.75" font-size="6.85" fill="#595959" text-anchor="middle">0</text>
<line x1="45.2" y1="510.75" x2="63.2" y2="510.75" stroke="#FFC000" stroke-width="2"/>
<text x="64.2" y="513.05" font-size="6.85" fill="#595959">Change In Cash Held</text>
<text x="161.62" y="513.05" font-size="6.85" fill="#595959" text-anchor="middle">330,157</text>
<text x="217.86" y="513.05" font-size="6.85" fill="#595959" text-anchor="middle">479,812</text>
<text x="274.1" y="513.05" font-size="6.85" fill="#595959" text-anchor="middle">533,851</text>
<text x="330.34" y="513.05" font-size="6.85" fill="#595959" text-anchor="middle">803,605</text>
<text x="386.58" y="513.05" font-size="6.85" fill="#595959" text-anchor="middle">903,056</text>
<line x1="45.2" y1="523.1" x2="63.2" y2="523.1" stroke="#5B9BD5" stroke-width="2"/>
<text x="64.2" y="525.4" font-size="6.85" fill="#595959">Closing Cash</text>
<text x="161.62" y="525.4" font-size="6.85" fill="#595959" text-anchor="middle">643,495</text>
<text x="217.86" y="525.4" font-size="6.85" fill="#595959" text-anchor="middle">942,807</text>
<text x="274.1" y="525.4" font-size="6.85" fill="#595959" text-anchor="middle">1,067,703</text>
<text x="330.34" y="525.4" font-size="6.85" fill="#595959" text-anchor="middle">1,607,209</text>
<text x="386.58" y="525.4" font-size="6.85" fill="#595959" text-anchor="middle">1,806,111</text>
</svg>
<svg style="position:absolute;left:438.7px;top:301.7px" width="569.8" height="230.9" viewBox="438.7 301.7 569.8 230.9" font-family="Liberation Sans, sans-serif">
<rect x="439.7" y="302.7" width="567.8" height="228.9" fill="#fff" stroke="#D9D9D9" stroke-width="0.9"/>
<line x1="544.5" y1="311.2" x2="996.8" y2="311.2" stroke="#D9D9D9" stroke-width="0.9"/>
<text x="537.3" y="314" font-size="6.85" fill="#595959" text-anchor="end">800,000</text>
<line x1="544.5" y1="335" x2="996.8" y2="335" stroke="#D9D9D9" stroke-width="0.9"/>
<text x="537.3" y="337.8" font-size="6.85" fill="#595959" text-anchor="end">600,000</text>
<line x1="544.5" y1="358.8" x2="996.8" y2="358.8" stroke="#D9D9D9" stroke-width="0.9"/>
<text x="537.3" y="361.6" font-size="6.85" fill="#595959" text-anchor="end">400,000</text>
<line x1="544.5" y1="382.6" x2="996.8" y2="382.6" stroke="#D9D9D9" stroke-width="0.9"/>
<text x="537.3" y="385.4" font-size="6.85" fill="#595959" text-anchor="end">200,000</text>
<line x1="544.5" y1="406.4" x2="996.8" y2="406.4" stroke="#D9D9D9" stroke-width="0.9"/>
<text x="537.3" y="409.2" font-size="6.85" fill="#595959" text-anchor="end">0</text>
<line x1="544.5" y1="430.2" x2="996.8" y2="430.2" stroke="#D9D9D9" stroke-width="0.9"/>
<text x="537.3" y="433" font-size="6.85" fill="#595959" text-anchor="end">-200,000</text>
<text x="537.3" y="456.8" font-size="6.85" fill="#595959" text-anchor="end">-400,000</text>
<rect x="552.15" y="382.94" width="6" height="23.46" fill="#4472C4"/>
<rect x="589.84" y="372.97" width="6" height="33.43" fill="#4472C4"/>
<rect x="627.53" y="379.1" width="6" height="27.3" fill="#4472C4"/>
<rect x="665.22" y="370.2" width="6" height="36.2" fill="#4472C4"/>
<rect x="702.91" y="377.83" width="6" height="28.57" fill="#4472C4"/>
<rect x="740.6" y="375.02" width="6" height="31.38" fill="#4472C4"/>
<rect x="778.3" y="376.62" width="6" height="29.78" fill="#4472C4"/>
<rect x="815.99" y="374.37" width="6" height="32.03" fill="#4472C4"/>
<rect x="853.68" y="373.33" width="6" height="33.07" fill="#4472C4"/>
<rect x="891.37" y="368.71" width="6" height="37.69" fill="#4472C4"/>
<rect x="929.06" y="367.65" width="6" height="38.75" fill="#4472C4"/>
<rect x="966.75" y="367.11" width="6" height="39.29" fill="#4472C4"/>
<rect x="560.35" y="406.4" width="6" height="41.65" fill="#ED7D31"/>
<rect x="606.44" y="406.4" width="6" height="2" fill="#A5A5A5"/>
<rect x="644.13" y="406.4" width="6" height="2" fill="#A5A5A5"/>
<rect x="681.82" y="406.4" width="6" height="2" fill="#A5A5A5"/>
<rect x="719.51" y="406.4" width="6" height="2" fill="#A5A5A5"/>
<rect x="757.2" y="406.4" width="6" height="2" fill="#A5A5A5"/>
<rect x="794.9" y="406.4" width="6" height="2" fill="#A5A5A5"/>
<rect x="832.59" y="406.4" width="6" height="2" fill="#A5A5A5"/>
<rect x="870.28" y="406.4" width="6" height="2" fill="#A5A5A5"/>
<rect x="907.97" y="406.4" width="6" height="2" fill="#A5A5A5"/>
<rect x="945.66" y="406.4" width="6" height="2" fill="#A5A5A5"/>
<rect x="983.35" y="406.4" width="6" height="2" fill="#A5A5A5"/>
<polyline points="563.35,448.05 601.04,372.97 638.73,379.1 676.42,370.2 714.11,377.83 751.8,375.02 789.5,376.62 827.19,374.37 864.88,373.33 902.57,368.71 940.26,367.65 977.95,367.11" fill="none" stroke="#FFD966" stroke-width="2" stroke-linejoin="round" stroke-linecap="round"/>
<polyline points="563.35,442.78 601.04,341.53 638.73,353.79 676.42,336.01 714.11,351.25 751.8,345.64 789.5,348.85 827.19,344.34 864.88,342.26 902.57,333.03 940.26,330.89 977.95,329.82" fill="none" stroke="#2E75B6" stroke-width="2" stroke-linejoin="round" stroke-linecap="round"/>
<line x1="544.5" y1="454.3" x2="996.8" y2="454.3" stroke="#D9D9D9" stroke-width="0.9"/>
<line x1="453.4" y1="466.4" x2="996.8" y2="466.4" stroke="#D9D9D9" stroke-width="0.9"/>
<line x1="453.4" y1="478.5" x2="996.8" y2="478.5" stroke="#D9D9D9" stroke-width="0.9"/>
<line x1="453.4" y1="490.8" x2="996.8" y2="490.8" stroke="#D9D9D9" stroke-width="0.9"/>
<line x1="453.4" y1="503" x2="996.8" y2="503" stroke="#D9D9D9" stroke-width="0.9"/>
<line x1="453.4" y1="515.3" x2="996.8" y2="515.3" stroke="#D9D9D9" stroke-width="0.9"/>
<line x1="453.4" y1="527.3" x2="996.8" y2="527.3" stroke="#D9D9D9" stroke-width="0.9"/>
<line x1="453.4" y1="466.4" x2="453.4" y2="527.3" stroke="#D9D9D9" stroke-width="0.9"/>
<line x1="544.5" y1="454.3" x2="544.5" y2="527.3" stroke="#D9D9D9" stroke-width="0.9"/>
<line x1="582.19" y1="454.3" x2="582.19" y2="527.3" stroke="#D9D9D9" stroke-width="0.9"/>
<line x1="619.88" y1="454.3" x2="619.88" y2="527.3" stroke="#D9D9D9" stroke-width="0.9"/>
<line x1="657.58" y1="454.3" x2="657.58" y2="527.3" stroke="#D9D9D9" stroke-width="0.9"/>
<line x1="695.27" y1="454.3" x2="695.27" y2="527.3" stroke="#D9D9D9" stroke-width="0.9"/>
<line x1="732.96" y1="454.3" x2="732.96" y2="527.3" stroke="#D9D9D9" stroke-width="0.9"/>
<line x1="770.65" y1="454.3" x2="770.65" y2="527.3" stroke="#D9D9D9" stroke-width="0.9"/>
<line x1="808.34" y1="454.3" x2="808.34" y2="527.3" stroke="#D9D9D9" stroke-width="0.9"/>
<line x1="846.03" y1="454.3" x2="846.03" y2="527.3" stroke="#D9D9D9" stroke-width="0.9"/>
<line x1="883.72" y1="454.3" x2="883.72" y2="527.3" stroke="#D9D9D9" stroke-width="0.9"/>
<line x1="921.42" y1="454.3" x2="921.42" y2="527.3" stroke="#D9D9D9" stroke-width="0.9"/>
<line x1="959.11" y1="454.3" x2="959.11" y2="527.3" stroke="#D9D9D9" stroke-width="0.9"/>
<line x1="996.8" y1="454.3" x2="996.8" y2="527.3" stroke="#D9D9D9" stroke-width="0.9"/>
<text x="563.35" y="462.25" font-size="6.85" fill="#595959" text-anchor="middle">Jan</text>
<text x="601.04" y="462.25" font-size="6.85" fill="#595959" text-anchor="middle">Feb</text>
<text x="638.73" y="462.25" font-size="6.85" fill="#595959" text-anchor="middle">Mar</text>
<text x="676.42" y="462.25" font-size="6.85" fill="#595959" text-anchor="middle">Apr</text>
<text x="714.11" y="462.25" font-size="6.85" fill="#595959" text-anchor="middle">May</text>
<text x="751.8" y="462.25" font-size="6.85" fill="#595959" text-anchor="middle">Jun</text>
<text x="789.5" y="462.25" font-size="6.85" fill="#595959" text-anchor="middle">Jul</text>
<text x="827.19" y="462.25" font-size="6.85" fill="#595959" text-anchor="middle">Aug</text>
<text x="864.88" y="462.25" font-size="6.85" fill="#595959" text-anchor="middle">Sep</text>
<text x="902.57" y="462.25" font-size="6.85" fill="#595959" text-anchor="middle">Oct</text>
<text x="940.26" y="462.25" font-size="6.85" fill="#595959" text-anchor="middle">Nov</text>
<text x="977.95" y="462.25" font-size="6.85" fill="#595959" text-anchor="middle">Dec</text>
<rect x="456.8" y="469.65" width="16.4" height="4" fill="#4472C4"/>
<text x="474.6" y="474.35" font-size="6.85" fill="#595959">Operating Cash Flows</text>
<text x="563.35" y="474.35" font-size="6.85" fill="#595959" text-anchor="middle">197,161</text>
<text x="601.04" y="474.35" font-size="6.85" fill="#595959" text-anchor="middle">280,961</text>
<text x="638.73" y="474.35" font-size="6.85" fill="#595959" text-anchor="middle">229,444</text>
<text x="676.42" y="474.35" font-size="6.85" fill="#595959" text-anchor="middle">304,168</text>
<text x="714.11" y="474.35" font-size="6.85" fill="#595959" text-anchor="middle">240,119</text>
<text x="751.8" y="474.35" font-size="6.85" fill="#595959" text-anchor="middle">263,719</text>
<text x="789.5" y="474.35" font-size="6.85" fill="#595959" text-anchor="middle">250,231</text>
<text x="827.19" y="474.35" font-size="6.85" fill="#595959" text-anchor="middle">269,186</text>
<text x="864.88" y="474.35" font-size="6.85" fill="#595959" text-anchor="middle">277,914</text>
<text x="902.57" y="474.35" font-size="6.85" fill="#595959" text-anchor="middle">316,697</text>
<text x="940.26" y="474.35" font-size="6.85" fill="#595959" text-anchor="middle">325,657</text>
<text x="977.95" y="474.35" font-size="6.85" fill="#595959" text-anchor="middle">330,157</text>
<rect x="456.8" y="481.85" width="16.4" height="4" fill="#ED7D31"/>
<text x="474.6" y="486.55" font-size="6.85" fill="#595959">Investing Cash Flows</text>
<text x="563.35" y="486.55" font-size="6.85" fill="#595959" text-anchor="middle">-350,000</text>
<text x="601.04" y="486.55" font-size="6.85" fill="#595959" text-anchor="middle">0</text>
<text x="638.73" y="486.55" font-size="6.85" fill="#595959" text-anchor="middle">0</text>
<text x="676.42" y="486.55" font-size="6.85" fill="#595959" text-anchor="middle">0</text>
<text x="714.11" y="486.55" font-size="6.85" fill="#595959" text-anchor="middle">0</text>
<text x="751.8" y="486.55" font-size="6.85" fill="#595959" text-anchor="middle">0</text>
<text x="789.5" y="486.55" font-size="6.85" fill="#595959" text-anchor="middle">0</text>
<text x="827.19" y="486.55" font-size="6.85" fill="#595959" text-anchor="middle">0</text>
<text x="864.88" y="486.55" font-size="6.85" fill="#595959" text-anchor="middle">0</text>
<text x="902.57" y="486.55" font-size="6.85" fill="#595959" text-anchor="middle">0</text>
<text x="940.26" y="486.55" font-size="6.85" fill="#595959" text-anchor="middle">0</text>
<text x="977.95" y="486.55" font-size="6.85" fill="#595959" text-anchor="middle">0</text>
<rect x="456.8" y="494.1" width="16.4" height="4" fill="#A5A5A5"/>
<text x="474.6" y="498.8" font-size="6.85" fill="#595959">Financing Cash Flows</text>
<text x="563.35" y="498.8" font-size="6.85" fill="#595959" text-anchor="middle">0</text>
<text x="601.04" y="498.8" font-size="6.85" fill="#595959" text-anchor="middle">-16,818</text>
<text x="638.73" y="498.8" font-size="6.85" fill="#595959" text-anchor="middle">-16,818</text>
<text x="676.42" y="498.8" font-size="6.85" fill="#595959" text-anchor="middle">-16,818</text>
<text x="714.11" y="498.8" font-size="6.85" fill="#595959" text-anchor="middle">-16,818</text>
<text x="751.8" y="498.8" font-size="6.85" fill="#595959" text-anchor="middle">-16,818</text>
<text x="789.5" y="498.8" font-size="6.85" fill="#595959" text-anchor="middle">-16,818</text>
<text x="827.19" y="498.8" font-size="6.85" fill="#595959" text-anchor="middle">-16,818</text>
<text x="864.88" y="498.8" font-size="6.85" fill="#595959" text-anchor="middle">-16,818</text>
<text x="902.57" y="498.8" font-size="6.85" fill="#595959" text-anchor="middle">-16,818</text>
<text x="940.26" y="498.8" font-size="6.85" fill="#595959" text-anchor="middle">-16,818</text>
<text x="977.95" y="498.8" font-size="6.85" fill="#595959" text-anchor="middle">-16,818</text>
<line x1="456" y1="508.35" x2="474.1" y2="508.35" stroke="#FFD966" stroke-width="2"/>
<text x="474.6" y="511.05" font-size="6.85" fill="#595959">Change In Cash Held</text>
<text x="563.35" y="511.05" font-size="6.85" fill="#595959" text-anchor="middle">-350,000</text>
<text x="601.04" y="511.05" font-size="6.85" fill="#595959" text-anchor="middle">280,961</text>
<text x="638.73" y="511.05" font-size="6.85" fill="#595959" text-anchor="middle">229,444</text>
<text x="676.42" y="511.05" font-size="6.85" fill="#595959" text-anchor="middle">304,168</text>
<text x="714.11" y="511.05" font-size="6.85" fill="#595959" text-anchor="middle">240,119</text>
<text x="751.8" y="511.05" font-size="6.85" fill="#595959" text-anchor="middle">263,719</text>
<text x="789.5" y="511.05" font-size="6.85" fill="#595959" text-anchor="middle">250,231</text>
<text x="827.19" y="511.05" font-size="6.85" fill="#595959" text-anchor="middle">269,186</text>
<text x="864.88" y="511.05" font-size="6.85" fill="#595959" text-anchor="middle">277,914</text>
<text x="902.57" y="511.05" font-size="6.85" fill="#595959" text-anchor="middle">316,697</text>
<text x="940.26" y="511.05" font-size="6.85" fill="#595959" text-anchor="middle">325,657</text>
<text x="977.95" y="511.05" font-size="6.85" fill="#595959" text-anchor="middle">330,157</text>
<line x1="456" y1="520.5" x2="474.1" y2="520.5" stroke="#2E75B6" stroke-width="2"/>
<text x="474.6" y="523.2" font-size="6.85" fill="#595959">Closing Cash</text>
<text x="563.35" y="523.2" font-size="6.85" fill="#595959" text-anchor="middle">-305,678</text>
<text x="601.04" y="523.2" font-size="6.85" fill="#595959" text-anchor="middle">545,105</text>
<text x="638.73" y="523.2" font-size="6.85" fill="#595959" text-anchor="middle">442,070</text>
<text x="676.42" y="523.2" font-size="6.85" fill="#595959" text-anchor="middle">591,518</text>
<text x="714.11" y="523.2" font-size="6.85" fill="#595959" text-anchor="middle">463,421</text>
<text x="751.8" y="523.2" font-size="6.85" fill="#595959" text-anchor="middle">510,620</text>
<text x="789.5" y="523.2" font-size="6.85" fill="#595959" text-anchor="middle">483,643</text>
<text x="827.19" y="523.2" font-size="6.85" fill="#595959" text-anchor="middle">521,554</text>
<text x="864.88" y="523.2" font-size="6.85" fill="#595959" text-anchor="middle">539,010</text>
<text x="902.57" y="523.2" font-size="6.85" fill="#595959" text-anchor="middle">616,577</text>
<text x="940.26" y="523.2" font-size="6.85" fill="#595959" text-anchor="middle">634,496</text>
<text x="977.95" y="523.2" font-size="6.85" fill="#595959" text-anchor="middle">643,495</text>
</svg>
<div style="position:absolute;left:0px;top:572.8px;width:1024px;height:21.4px;background:#E6E8EB;"></div>
<svg style="position:absolute;left:0;top:572px" width="60" height="22" viewBox="0 572 60 22"><g fill="none" stroke-width="1" stroke-linecap="round" stroke-linejoin="round">
<path d="M21.2 579.8 L17.6 583.3 L21.2 586.8" stroke="#B5B5B5"/>
<path d="M39 579.8 L42.6 583.3 L39 586.8" stroke="#444"/></g></svg>
<div style="position:absolute;left:80.6px;top:576.8px;height:13px;line-height:13px;font-size:9.4px;color:#333;font-weight:400;letter-spacing:0.02px;white-space:nowrap;">How To</div>
<div style="position:absolute;left:121.4px;top:578px;width:0.8px;height:11px;background:#C9CBCE;"></div>
<div style="position:absolute;left:124.3px;top:575.8px;width:41.8px;height:15.4px;background:#FAF79C;border-radius:3px;"></div>
<div style="position:absolute;left:130.1px;top:576.8px;height:13px;line-height:13px;font-size:9.4px;color:#222;font-weight:400;letter-spacing:-0.35px;white-space:nowrap;">IS 2025</div>
<div style="position:absolute;left:167.9px;top:578px;width:0.8px;height:11px;background:#C9CBCE;"></div>
<div style="position:absolute;left:177px;top:576.8px;height:13px;line-height:13px;font-size:9.4px;color:#333;font-weight:400;letter-spacing:-0.4px;white-space:nowrap;">CF 2025</div>
<div style="position:absolute;left:219.4px;top:578px;width:0.8px;height:11px;background:#C9CBCE;"></div>
<div style="position:absolute;left:227.7px;top:576.8px;height:13px;line-height:13px;font-size:9.4px;color:#333;font-weight:400;letter-spacing:-0.52px;white-space:nowrap;">BS 2025</div>
<div style="position:absolute;left:269.2px;top:578px;width:0.8px;height:11px;background:#C9CBCE;"></div>
<div style="position:absolute;left:268px;top:572.5px;width:133.5px;height:5px;background:#fff;"></div>
<div style="position:absolute;left:264px;top:572.8px;width:9px;height:8px;background:#E6E8EB;border-top-right-radius:4px;"></div>
<div style="position:absolute;left:396.5px;top:572.8px;width:9px;height:8px;background:#E6E8EB;border-top-left-radius:4px;"></div>
<div style="position:absolute;left:273px;top:572.5px;width:123.5px;height:18.2px;background:#fff;border-radius:0 0 4px 4px;"></div>
<div style="position:absolute;left:278.3px;top:575.4px;height:13px;line-height:13px;font-size:9.4px;color:#222;font-weight:400;letter-spacing:-0.03px;white-space:nowrap;-webkit-text-stroke:0.35px #222;">Statements Summary 2025</div>
<div style="position:absolute;left:278.3px;top:588.5px;width:113.5px;height:1.4px;background:#1A8A4C;"></div>
<div style="position:absolute;left:408.7px;top:576.8px;height:13px;line-height:13px;font-size:9.4px;color:#333;font-weight:400;letter-spacing:-0.6px;white-space:nowrap;">CAPEX 2025</div>
<div style="position:absolute;left:466.9px;top:578px;width:0.8px;height:11px;background:#C9CBCE;"></div>
<div style="position:absolute;left:470.6px;top:575.3px;width:41.6px;height:16px;background:#FAF79C;border-radius:3px;"></div>
<div style="position:absolute;left:476.3px;top:576.8px;height:13px;line-height:13px;font-size:9.4px;color:#222;font-weight:400;letter-spacing:-0.35px;white-space:nowrap;">IS 2026</div>
<div style="position:absolute;left:515.1px;top:578px;width:0.8px;height:11px;background:#C9CBCE;"></div>
<div style="position:absolute;left:523.5px;top:576.8px;height:13px;line-height:13px;font-size:9.4px;color:#333;font-weight:400;letter-spacing:-0.5px;white-space:nowrap;">CF 2026</div>
<div style="position:absolute;left:565.2px;top:578px;width:0.8px;height:11px;background:#C9CBCE;"></div>
<div style="position:absolute;left:574.3px;top:576.8px;height:13px;line-height:13px;font-size:9.4px;color:#333;font-weight:400;letter-spacing:-0.54px;white-space:nowrap;">BS 2026</div>
<div style="position:absolute;left:615.6px;top:578px;width:0.8px;height:11px;background:#C9CBCE;"></div>
<div style="position:absolute;left:625.7px;top:576.8px;height:13px;line-height:13px;font-size:9.4px;color:#333;font-weight:400;letter-spacing:-0.14px;white-space:nowrap;">Statements Summary 2026</div>
<div style="position:absolute;left:746.6px;top:578px;width:0.8px;height:11px;background:#C9CBCE;"></div>
<div style="position:absolute;left:755px;top:576.8px;height:13px;line-height:13px;font-size:9.4px;color:#333;font-weight:400;letter-spacing:-0.54px;white-space:nowrap;">CAPEX 2026</div>
<div style="position:absolute;left:813.1px;top:578px;width:0.8px;height:11px;background:#C9CBCE;"></div>
<div style="position:absolute;left:816.3px;top:575.5px;width:42.9px;height:15.8px;background:#FAF79C;border-radius:3px;"></div>
<div style="position:absolute;left:822.7px;top:576.8px;height:13px;line-height:13px;font-size:9.4px;color:#222;font-weight:400;letter-spacing:-0.33px;white-space:nowrap;">IS 2027</div>
<div style="position:absolute;left:869.8px;top:577px;width:32px;height:13px;overflow:hidden"><div style="position:absolute;left:-0.3px;top:-0.2px;height:13px;line-height:13px;font-size:9.4px;color:#333;letter-spacing:-0.4px;white-space:nowrap">CF 2027</div></div>
<svg style="position:absolute;left:900px;top:572px" width="124" height="22" viewBox="900 572 124 22">
<g fill="#444"><rect x="907.8" y="582.1" width="1.7" height="1.5"/><rect x="910.7" y="582.1" width="1.7" height="1.5"/><rect x="913.6" y="582.1" width="1.7" height="1.5"/>
<circle cx="954.4" cy="579.9" r="0.75"/><circle cx="954.4" cy="583.4" r="0.75"/><circle cx="954.4" cy="586.9" r="0.75"/></g>
<path d="M929.2 583.3 H937 M933.1 579.4 V587.2" stroke="#444" stroke-width="1" fill="none"/>
<rect x="965.5" y="577.5" width="46" height="11.1" rx="5.5" fill="#F7F7F7"/>
<path d="M973.8 580.2 L969.8 583 L973.8 585.8 Z" fill="#6E6E6E"/>
<rect x="976.6" y="580.4" width="20.6" height="5.4" rx="2.7" fill="#7A7A7A"/>
<path d="M1004.6 580.2 L1008.6 583 L1004.6 585.8 Z" fill="#6E6E6E"/>
</svg>
<div style="position:absolute;left:0px;top:594.2px;width:1024px;height:12.8px;background:#F3F3F3;"></div>
<div style="position:absolute;left:7.8px;top:595.8px;height:11px;line-height:11px;font-size:7.2px;color:#444;font-weight:400;letter-spacing:-0.15px;white-space:nowrap;">Ready</div>
<svg style="position:absolute;left:36px;top:594px" width="40" height="13" viewBox="36 594 40 13"><g fill="none" stroke="#444" stroke-width="0.8">
<rect x="40.3" y="596.6" width="9.2" height="8.6"/><rect x="40.3" y="596.6" width="9.2" height="1.6" fill="#444"/><circle cx="45.6" cy="602.2" r="1.7"/><circle cx="45.6" cy="602.2" r="0.5" fill="#444"/>
<circle cx="65.5" cy="598.4" r="1.1"/><ellipse cx="62.4" cy="599.3" rx="1.3" ry="0.9"/><ellipse cx="68.6" cy="599.3" rx="1.3" ry="0.9"/><path d="M63 600.6 L63.4 605.6 M63.4 603.6 L65 605.6 M66.4 602.6 L70.2 605.8 M70 602.6 L66.6 605.8"/>
</g></svg>
<div style="position:absolute;left:73px;top:595.8px;height:11px;line-height:11px;font-size:7px;color:#333;font-weight:700;letter-spacing:-0.12px;white-space:nowrap;">Accessibility: Investigate</div>
<div style="position:absolute;left:827px;top:594.6px;width:25px;height:12px;background:#E2E2E2;"></div>
<svg style="position:absolute;left:820px;top:594px" width="204" height="13" viewBox="820 594 204 13"><g fill="none" stroke="#555" stroke-width="0.8">
<rect x="834.4" y="597.4" width="9" height="8"/><line x1="837.4" y1="597.4" x2="837.4" y2="605.4"/><line x1="840.4" y1="597.4" x2="840.4" y2="605.4"/>
<line x1="834.4" y1="600.1" x2="843.4" y2="600.1"/><line x1="834.4" y1="602.8" x2="843.4" y2="602.8"/>
<rect x="861.4" y="597.4" width="9.2" height="8"/><rect x="863.6" y="599.2" width="4.8" height="4.4"/>
<rect x="888.3" y="597.3" width="9.2" height="8.1"/><path d="M888.3 601.8 H893.6 V597.3"/><path d="M891 597.3 V601.8" stroke="#999"/>
<line x1="910" y1="601.6" x2="914.6" y2="601.6"/><line x1="988" y1="601.6" x2="993.3" y2="601.6"/><line x1="990.65" y1="599" x2="990.65" y2="604.2"/>
</g>
<line x1="918.6" y1="601.6" x2="985" y2="601.6" stroke="#9A9A9A" stroke-width="0.9"/>
<rect x="949" y="597.2" width="3" height="8.4" fill="#555"/>
</svg>
<div style="position:absolute;left:1001.7px;top:595.8px;height:11px;line-height:11px;font-size:7.4px;color:#555;font-weight:400;letter-spacing:-0.1px;white-space:nowrap;">96%</div>
</body></html>
